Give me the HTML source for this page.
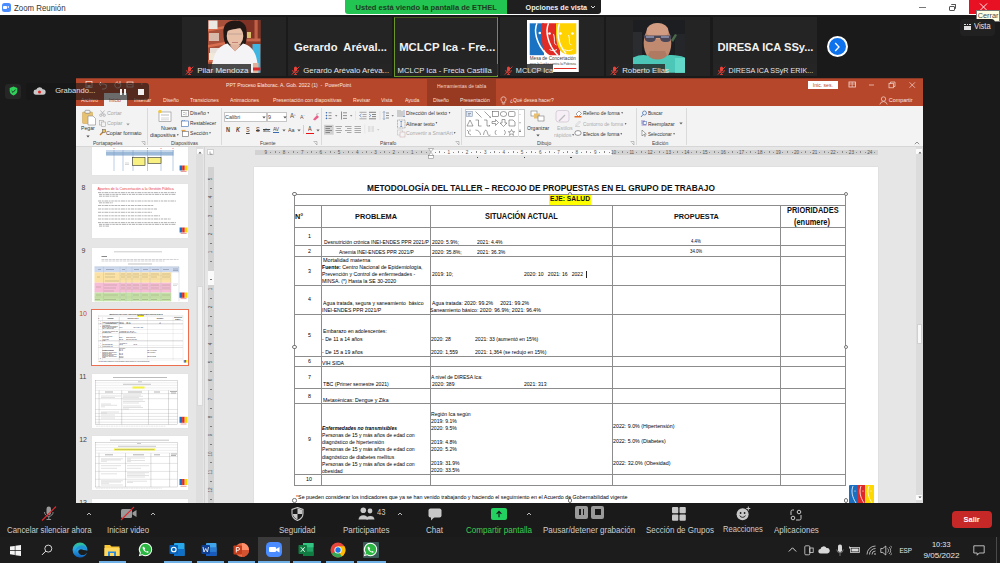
<!DOCTYPE html>
<html><head><meta charset="utf-8">
<style>
*{margin:0;padding:0;box-sizing:border-box}
html,body{width:1000px;height:563px;overflow:hidden;background:#1a1a1a;font-family:"Liberation Sans",sans-serif;position:relative}
.a{position:absolute;white-space:nowrap}
.tile{position:absolute;top:17px;width:104px;height:59px;background:#242424}
.nm{position:absolute;height:12px;background:#2b2b2b;color:#e6e6e6;font-size:8px;line-height:12px;padding-left:16px;overflow:hidden}
.big{position:absolute;width:104px;text-align:center;color:#f2f2f2;font-weight:bold;font-size:10.4px;line-height:14px}
.rb{line-height:6px;color:#444;transform:scaleX(0.8696);transform-origin:0 50%}
.ptx{line-height:6px;transform:scaleX(0.8696);transform-origin:0 50%}
.th{width:96px;height:54px;background:#fff;box-shadow:0 0 0.6px #c8c8c8;overflow:hidden}
.tn{font-size:7px;line-height:8px;color:#444}
.rn{font-size:4.6px;line-height:5.6px;color:#555;text-align:center}
.rnv{font-size:4.6px;line-height:6px;color:#555;text-align:center;transform:rotate(-90deg)}
.tt{color:#000}
.dd{display:inline-block;width:0;height:0;border-left:1.8px solid transparent;border-right:1.8px solid transparent;border-top:2px solid #666;margin-left:1.5px;vertical-align:middle;position:relative;top:-0.5px}
.nmt{font-size:8px;line-height:10px;color:#e4e4e4}
.bigt{font-size:10.4px;line-height:14px;font-weight:bold;color:#f2f2f2}
.zt{line-height:10px;color:#cdcdcd;transform:scaleX(0.9259);transform-origin:0 50%}
.tb{line-height:10px;color:#e8e8e8}
</style></head><body>
<!-- TITLE BAR -->
<div class="a" style="left:0;top:0;width:1000px;height:15px;background:#fff"></div>
<div class="a" style="left:1.5px;top:3px;width:9.5px;height:8.5px;background:#4a8cff;border-radius:2.5px"></div>
<div class="a" style="left:3.3px;top:5.6px;width:4px;height:3.4px;background:#fff;border-radius:0.8px"></div>
<div class="a" style="left:7.2px;top:5.8px;width:0;height:0;border-right:2.4px solid #fff;border-top:1.5px solid transparent;border-bottom:1.5px solid transparent"></div>
<div class="a" style="left:14px;top:2.8px;font-size:8.9px;line-height:10px;color:#333;transform:scaleX(0.885);transform-origin:0 50%">Zoom Reunión</div>
<!-- banner -->
<div class="a" style="left:345px;top:0;width:162px;height:13.5px;background:#22c55e;background:#23c552;border-radius:0 0 0 3px"></div>
<div class="a" style="left:355.5px;top:2.5px;font-size:7.55px;line-height:10px;font-weight:bold;color:#1d3b22">Usted está viendo la pantalla de ETHEL</div>
<div class="a" style="left:507px;top:0;width:94px;height:13.5px;background:#1f1f1f;border-radius:0 0 3px 0"></div>
<div class="a" style="left:525.6px;top:2.5px;font-size:7.2px;line-height:10px;font-weight:bold;color:#f0f0f0">Opciones de vista</div>
<svg class="a" style="left:590px;top:5px" width="6" height="4" viewBox="0 0 6 4"><path d="M1 1 L3 3 L5 1" stroke="#ddd" stroke-width="1" fill="none"/></svg>
<!-- window controls -->
<div class="a" style="left:919px;top:6.5px;width:6.5px;height:1px;background:#777"></div>
<div class="a" style="left:949px;top:5.5px;width:6px;height:5px;border:1px solid #555;border-radius:1px"></div>
<div class="a" style="left:950.5px;top:4.3px;width:5.5px;height:5px;border-top:1px solid #555;border-right:1px solid #555;border-radius:1px"></div>
<div class="a" style="left:968.5px;top:0;width:31.5px;height:13.5px;background:#e81123"></div>
<svg class="a" style="left:979px;top:3px" width="9" height="8" viewBox="0 0 9 8"><path d="M1 0.5 L8 7.5 M8 0.5 L1 7.5" stroke="#fff" stroke-width="0.9"/></svg>
<div class="a" style="left:976px;top:9.5px;width:23.5px;height:12px;background:#ffffe1;border:1px solid #767676"></div>
<div class="a" style="left:977.8px;top:11px;font-size:7.25px;line-height:9px;color:#3c4a55">Cerrar</div>
<!-- Vista -->
<div class="a" style="left:960px;top:19px;width:35px;height:17px;background:#212121;border-radius:4px"></div>
<div class="a" style="left:964px;top:23.5px;width:7px;height:6.5px;background:#e0e0e0"></div>
<div class="a" style="left:964px;top:24.8px;width:7px;height:0.6px;background:#212121"></div>
<div class="a" style="left:966.2px;top:23.5px;width:0.5px;height:1.3px;background:#212121"></div>
<div class="a" style="left:968.4px;top:23.5px;width:0.5px;height:1.3px;background:#212121"></div>
<div class="a" style="left:974px;top:22.4px;font-size:8.2px;line-height:10px;color:#e6e6e6;transform:scaleX(0.92);transform-origin:0 50%">Vista</div>

<!-- TILES -->
<div class="tile" style="left:182px"></div>
<div class="tile" style="left:288px"></div>
<div class="tile" style="left:394px;top:16.5px;height:60px;border:1px solid #6a962a;border-top-color:#44561f;background:#242424"></div>
<div class="tile" style="left:500px"></div>
<div class="tile" style="left:606px"></div>
<div class="tile" style="left:713px"></div>

<!-- Pilar photo -->
<svg class="a" style="left:208.2px;top:20.2px" width="52.4" height="52.8" viewBox="0 0 52.4 52.8">
 <rect width="52.4" height="52.8" fill="#a9503a"/>
 <path d="M0 9 L22 5 L22 7.5 L0 11.5z M0 25 L22 21 L22 23.5 L0 27.5z M0 40 L20 37 L20 39.5 L0 42.5z" fill="#d87050"/>
 <rect x="0.5" y="0.5" width="9" height="8.5" fill="#ece8e4"/>
 <rect x="1" y="13" width="10" height="8" fill="#d8b8a8"/>
 <rect x="2" y="28" width="11" height="7" fill="#e8e0d8"/>
 <rect x="1" y="33" width="8" height="7" fill="#f0e8d8"/>
 <rect x="4" y="43" width="7" height="4" fill="#e8c020"/>
 <rect x="30" y="0" width="22.4" height="20" fill="#803224"/>
 <rect x="46.5" y="0" width="3.2" height="22" fill="#c06046"/>
 <rect x="30" y="18.5" width="22.4" height="3" fill="#c8664c"/>
 <rect x="39" y="12" width="4" height="6" fill="#d8c070"/>
 <rect x="36" y="21.5" width="16.4" height="12" fill="#903e2c"/>
 <path d="M44.5 24 h7.9 v28.8 h-7.9z" fill="#3fb6e2"/>
 <path d="M15.5 14 C14.5 4 20 0.5 27 0.5 C35 0.5 39.5 5 38.5 14 C39 20 38 24 36 26.5 L19 26.5 C16.5 23 15.5 19 15.5 14z" fill="#221816"/>
 <ellipse cx="27" cy="16" rx="8.3" ry="10.2" fill="#e8c0a8"/>
 <path d="M19.5 7.5 C22 4 31 4 35 7.5 C31 8.5 24 9 19.5 11z" fill="#221816"/>
 <path d="M20 14 h14" stroke="#9a8a88" stroke-width="0.5"/>
 <path d="M24 22.5 h6" stroke="#b8706a" stroke-width="0.8"/>
 <path d="M3 52.8 C5 34 9 26.5 19.5 23.5 L27 31 L35 23.5 C46 26.5 50 36 50 52.8z" fill="#f4f4f6"/>
 <path d="M21.5 24.5 L27 31.5 L33 24.5z" fill="#e0b49e"/>
 <path d="M45 43 h5.5 v9.8 h-5.5z" fill="#e0b098"/>
 <rect x="45" y="47.5" width="7.4" height="3" fill="#d82a2a"/>
</svg>
<!-- MCLCP logo -->
<svg class="a" style="left:527.2px;top:20.2px" width="51.8" height="52.2" viewBox="0 0 51.8 52.2">
 <rect width="51.8" height="52.2" fill="#fff"/>
 <path d="M2.7 3.3 H17 V35.2 H2.7z" fill="#1a73c2"/>
 <path d="M15 3.3 H33 V35.2 H23 C18 33 15 28 15 20z" fill="#e22b25"/>
 <path d="M29 3.3 H49.3 V33.5 C45 35.5 38 35 34 31.5 C30 27 29 20 29 12z" fill="#ffd200"/>
 <path d="M10 3.3 C7 10 8 23 20.5 35.5 M21.5 3.3 C18.5 10 19.5 24 31 35.5 M32.5 3.3 C29.5 12 30.5 24 39 33.5" stroke="#fff" stroke-width="1.5" fill="none"/>
 <circle cx="12.8" cy="13" r="1.3" fill="#fff"/><circle cx="22.5" cy="13.5" r="1.3" fill="#fff"/><circle cx="33.5" cy="13.5" r="1.3" fill="#fff"/><circle cx="45.5" cy="13.5" r="1.3" fill="#fff"/>
 <path d="M26.5 14 C28.5 20 26 24 29.5 25 M41.5 15 C43.5 20 41 24 44.5 25" stroke="#fff" stroke-width="0.9" fill="none"/>
 <path d="M22.5 29.5 c2 1.5 5 1.5 7.5 0 M37.5 29.5 c2 1.5 6 1.5 8 0" stroke="#fff" stroke-width="0.9" fill="none"/>
 <text x="2.8" y="40.3" font-family="Liberation Sans" font-size="4.5" fill="#333" textLength="46">Mesa de Concertación</text>
 <text x="2.8" y="45.2" font-family="Liberation Sans" font-size="3.4" fill="#444" textLength="46">para la Lucha contra la Pobreza</text>
 <rect x="27" y="48" width="22.3" height="1" fill="#e22b25"/>
</svg>
<!-- Roberto photo -->
<svg class="a" style="left:633.3px;top:20.2px" width="52.2" height="52.8" viewBox="0 0 52.2 52.8">
 <rect width="52.2" height="52.8" fill="#1c1e22"/>
 <rect x="0" y="12" width="9" height="26" fill="#2a2c30"/>
 <rect x="42" y="14" width="10.2" height="22" fill="#24262a"/>
 <path d="M38 20 l4 -6 l2 1 l-4 7z" fill="#4a6a4a"/>
 <ellipse cx="24.5" cy="23" rx="13.8" ry="19.5" fill="#bf8a70"/>
 <ellipse cx="24.5" cy="11" rx="11" ry="8" fill="#d29c82"/>
 <path d="M10.5 15.5 h28 l-1 5 c-2.5 2 -7 2 -9.5 0 l-1 -2.5 h-4 l-1 2.5 c-2.5 2 -7 2 -9.5 0z" fill="#4a4658"/>
 <path d="M13 17 h8 M28 17 h8" stroke="#b8c0e0" stroke-width="1.2"/>
 <path d="M20 31.5 h9" stroke="#9a6050" stroke-width="1"/>
 <path d="M0 52.8 V37.5 C6 34.5 11 34.5 15 35.5 C19 40 30 40 34 35.5 C40 34.5 46 35.5 52.2 37.5 V52.8z" fill="#4cc6b6"/>
 <path d="M15 35.5 C19 41 30 41 34 35.5 L32 31 h-15z" fill="#b07a62"/>
 <rect x="42" y="38" width="10" height="14.8" fill="#62d8c8"/>
</svg>
<div class="a" style="left:182px;top:63.6px;width:68.8px;height:11.6px;background:rgba(38,38,38,0.82)"></div>
<svg class="a" style="left:184.8px;top:65.5px" width="9" height="9" viewBox="0 0 9 9"><rect x="3" y="0.6" width="3" height="5" rx="1.5" fill="#e8433a"/><path d="M1.6 4 a2.9 2.9 0 0 0 5.8 0 M4.5 7 v1.5 M3 8.5 h3" stroke="#e8433a" stroke-width="0.8" fill="none"/><path d="M0.8 8.6 L8.3 0.6" stroke="#e8433a" stroke-width="0.9"/></svg>
<div class="a nmt" style="left:197.2px;top:65.80px">Pilar Mendoza</div>
<div class="a" style="left:288.5px;top:63.6px;width:103px;height:11.6px;background:rgba(38,38,38,0.82)"></div>
<svg class="a" style="left:291.3px;top:65.5px" width="9" height="9" viewBox="0 0 9 9"><rect x="3" y="0.6" width="3" height="5" rx="1.5" fill="#e8433a"/><path d="M1.6 4 a2.9 2.9 0 0 0 5.8 0 M4.5 7 v1.5 M3 8.5 h3" stroke="#e8433a" stroke-width="0.8" fill="none"/><path d="M0.8 8.6 L8.3 0.6" stroke="#e8433a" stroke-width="0.9"/></svg>
<div class="a nmt" style="left:303.2px;top:65.80px;font-size:7.85px">Gerardo Arévalo Aréva...</div>
<div class="a" style="left:395px;top:63.6px;width:103.5px;height:11.6px;background:rgba(38,38,38,0.82)"></div>
<div class="a nmt" style="left:397.5px;top:65.80px;font-size:7.66px">MCLCP Ica - Frecia Castilla</div>
<div class="a" style="left:501px;top:63.6px;width:51.5px;height:11.6px;background:rgba(38,38,38,0.82)"></div>
<svg class="a" style="left:503.8px;top:65.5px" width="9" height="9" viewBox="0 0 9 9"><rect x="3" y="0.6" width="3" height="5" rx="1.5" fill="#e8433a"/><path d="M1.6 4 a2.9 2.9 0 0 0 5.8 0 M4.5 7 v1.5 M3 8.5 h3" stroke="#e8433a" stroke-width="0.8" fill="none"/><path d="M0.8 8.6 L8.3 0.6" stroke="#e8433a" stroke-width="0.9"/></svg>
<div class="a nmt" style="left:515.8px;top:66.00px;font-size:7.3px">MCLCP Ica</div>
<div class="a" style="left:607px;top:63.6px;width:58px;height:11.6px;background:rgba(38,38,38,0.82)"></div>
<svg class="a" style="left:609.8px;top:65.5px" width="9" height="9" viewBox="0 0 9 9"><rect x="3" y="0.6" width="3" height="5" rx="1.5" fill="#e8433a"/><path d="M1.6 4 a2.9 2.9 0 0 0 5.8 0 M4.5 7 v1.5 M3 8.5 h3" stroke="#e8433a" stroke-width="0.8" fill="none"/><path d="M0.8 8.6 L8.3 0.6" stroke="#e8433a" stroke-width="0.9"/></svg>
<div class="a nmt" style="left:622.2px;top:65.80px;font-size:7.8px">Roberto Elias</div>
<div class="a" style="left:714px;top:63.6px;width:103px;height:11.6px;background:rgba(38,38,38,0.82)"></div>
<svg class="a" style="left:716.8px;top:65.5px" width="9" height="9" viewBox="0 0 9 9"><rect x="3" y="0.6" width="3" height="5" rx="1.5" fill="#e8433a"/><path d="M1.6 4 a2.9 2.9 0 0 0 5.8 0 M4.5 7 v1.5 M3 8.5 h3" stroke="#e8433a" stroke-width="0.8" fill="none"/><path d="M0.8 8.6 L8.3 0.6" stroke="#e8433a" stroke-width="0.9"/></svg>
<div class="a nmt" style="left:728.6px;top:66.20px;font-size:7.15px">DIRESA ICA SSyR ERIK...</div>
<div class="a bigt" style="left:294px;top:39.6px;font-size:11.2px">Gerardo&nbsp; Aréval...</div>
<div class="a bigt" style="left:399.2px;top:39.6px;font-size:11.33px">MCLCP Ica - Fre...</div>
<div class="a bigt" style="left:717.6px;top:39.6px;font-size:11.2px;letter-spacing:-0.05px">DIRESA ICA SSy...</div>
<!-- next arrow -->
<div class="a" style="left:826.5px;top:36.2px;width:21px;height:21px;border-radius:50%;background:#0e72ed;border:2px solid #fff"></div>
<svg class="a" style="left:833px;top:42px" width="8" height="10" viewBox="0 0 8 10"><path d="M2.2 1 L6 5 L2.2 9" stroke="#fff" stroke-width="1.3" fill="none"/></svg>
<!-- PPT WINDOW -->
<div class="a" style="left:76px;top:78px;width:847px;height:424.5px;background:#e6e6e6;overflow:hidden"></div>
<div class="a" style="left:76px;top:78px;width:847px;height:28px;background:#b7472a"></div>
<div class="a" style="left:427.2px;top:78px;width:68.8px;height:28px;background:#983a22"></div>
<div class="a" style="left:76px;top:78px;width:847px;height:0.8px;background:#8a3a26"></div>
<div class="a ptx" style="left:226px;top:82px;font-size:5.865px;line-height:6px;color:#fbe9e3">PPT Proceso Elaborac. A. Gob. 2022 (1) &nbsp;- &nbsp;PowerPoint</div>
<div class="a ptx" style="left:436.75px;top:82.5px;font-size:5.750px;line-height:6px;color:#f2d6cc">Herramientas de tabla</div>
<!-- quick access icons -->
<svg class="a" style="left:84px;top:80px" width="62" height="10" viewBox="0 0 62 10">
 <rect x="2" y="1.5" width="6" height="6" fill="none" stroke="#f3d9d0" stroke-width="0.8"/><rect x="3.5" y="5" width="3" height="2.5" fill="#f3d9d0"/>
 <path d="M15 4 h5 a2.5 2.5 0 0 1 0 5 h-2 M15 4 l2 -2 M15 4 l2 2" stroke="#f3d9d0" stroke-width="0.8" fill="none"/>
 <path d="M21.5 5 h1.5" stroke="#f3d9d0" stroke-width="0.6"/>
 <path d="M34 2 a3 3 0 1 0 2 1 M36 1 v2.5 h-2.5" stroke="#f3d9d0" stroke-width="0.8" fill="none"/>
 <rect x="43" y="2" width="6" height="5" fill="none" stroke="#f3d9d0" stroke-width="0.8"/><path d="M44 4.5 h4" stroke="#f3d9d0" stroke-width="0.6"/>
 <path d="M57 4 h1.5" stroke="#f3d9d0" stroke-width="0.7"/>
</svg>
<!-- right title controls -->
<div class="a" style="left:808px;top:81px;width:29.6px;height:7.8px;background:#fff"></div>
<div class="a" style="left:812.8px;top:81.8px;font-size:5.1px;line-height:6px;color:#b7472a">Inic. ses.</div>
<svg class="a" style="left:848px;top:81px" width="70" height="8" viewBox="0 0 70 8">
 <rect x="1" y="1" width="6.5" height="5" fill="none" stroke="#f6ddd5" stroke-width="0.8"/><path d="M4.2 1 v5 M1 3 h6.5" stroke="#f6ddd5" stroke-width="0.6"/>
 <path d="M21 4 h5" stroke="#f6ddd5" stroke-width="0.7"/>
 <rect x="41" y="2.3" width="4.5" height="4.5" fill="none" stroke="#f6ddd5" stroke-width="0.7"/><path d="M42.5 2.3 v-1.3 h4.5 v4.5 h-1.5" stroke="#f6ddd5" stroke-width="0.7" fill="none"/>
 <path d="M61.5 1.3 l5.5 5.5 M67 1.3 l-5.5 5.5" stroke="#f6ddd5" stroke-width="0.7"/>
</svg>
<svg class="a" style="left:879px;top:96px" width="9" height="9" viewBox="0 0 9 9"><circle cx="4.5" cy="3" r="2.2" fill="none" stroke="#f6ddd5" stroke-width="0.7"/><path d="M0.8 8.5 a3.8 3.8 0 0 1 7.4 0" fill="none" stroke="#f6ddd5" stroke-width="0.7"/></svg>
<div class="a" style="left:888.8px;top:97px;font-size:5.4px;line-height:6px;color:#fbe9e3">Compartir</div>
<!-- tabs -->
<div class="a" style="left:103.5px;top:93.2px;width:23.7px;height:13px;background:#f3f3f3"></div>
<div class="a ptx" style="left:81px;top:97px;font-size:5.865px;line-height:6px;color:#fbe3da">Archivo</div>
<div class="a ptx" style="left:109px;top:97px;font-size:5.865px;line-height:6px;color:#b7472a">Inicio</div>
<div class="a ptx" style="left:134px;top:97px;font-size:5.865px;line-height:6px;color:#fbe3da">Insertar</div>
<div class="a ptx" style="left:162.5px;top:97px;font-size:5.865px;line-height:6px;color:#fbe3da">Diseño</div>
<div class="a ptx" style="left:190px;top:97px;font-size:5.865px;line-height:6px;color:#fbe3da">Transiciones</div>
<div class="a ptx" style="left:230px;top:97px;font-size:5.865px;line-height:6px;color:#fbe3da">Animaciones</div>
<div class="a ptx" style="left:272.7px;top:97px;font-size:5.980px;line-height:6px;color:#fbe3da">Presentación con diapositivas</div>
<div class="a ptx" style="left:353px;top:97px;font-size:5.865px;line-height:6px;color:#fbe3da">Revisar</div>
<div class="a ptx" style="left:381px;top:97px;font-size:5.865px;line-height:6px;color:#fbe3da">Vista</div>
<div class="a ptx" style="left:404.5px;top:97px;font-size:5.865px;line-height:6px;color:#fbe3da">Ayuda</div>
<div class="a ptx" style="left:432.5px;top:97px;font-size:5.865px;line-height:6px;color:#fbe3da">Diseño</div>
<div class="a ptx" style="left:459.5px;top:97px;font-size:5.865px;line-height:6px;color:#fbe3da">Presentación</div>
<svg class="a" style="left:500px;top:95.5px" width="7" height="9" viewBox="0 0 7 9"><path d="M3.5 0.8 a2.5 2.5 0 0 1 1.4 4.6 v1.4 h-2.8 v-1.4 a2.5 2.5 0 0 1 1.4 -4.6 M2.3 8 h2.4" fill="none" stroke="#fbe3da" stroke-width="0.7"/></svg>
<div class="a ptx" style="left:510px;top:97px;font-size:5.692px;line-height:6px;color:#fbe3da">¿Qué desea hacer?</div>

<!-- RIBBON -->
<div class="a" style="left:76px;top:106px;width:847px;height:41px;background:#f3f3f3;border-bottom:1px solid #d6d6d6"></div>
<!-- separators -->
<div class="a" style="left:147.2px;top:108px;width:0.7px;height:37px;background:#dadada"></div>
<div class="a" style="left:221.3px;top:108px;width:0.7px;height:37px;background:#dadada"></div>
<div class="a" style="left:320.5px;top:108px;width:0.7px;height:37px;background:#dadada"></div>
<div class="a" style="left:461px;top:108px;width:0.7px;height:37px;background:#dadada"></div>
<div class="a" style="left:635.8px;top:108px;width:0.7px;height:37px;background:#dadada"></div>
<div class="a" style="left:685.7px;top:108px;width:0.7px;height:37px;background:#dadada"></div>
<!-- group labels -->
<div class="a rb" style="left:93.3px;top:139.8px;font-size:5.750px">Portapapeles</div>
<div class="a rb" style="left:170.5px;top:139.8px;font-size:5.750px">Diapositivas</div>
<div class="a rb" style="left:260px;top:139.8px;font-size:5.750px">Fuente</div>
<div class="a rb" style="left:380px;top:139.8px;font-size:5.750px">Párrafo</div>
<div class="a rb" style="left:537px;top:139.8px;font-size:5.750px">Dibujo</div>
<div class="a rb" style="left:651.8px;top:139.8px;font-size:5.750px">Edición</div>
<svg class="a" style="left:141px;top:141px" width="5" height="5" viewBox="0 0 5 5"><path d="M0.5 0.5 h3.5 v3.5 M1.5 1.5 l2.5 2.5" stroke="#888" stroke-width="0.5" fill="none"/></svg>
<svg class="a" style="left:313px;top:141px" width="5" height="5" viewBox="0 0 5 5"><path d="M0.5 0.5 h3.5 v3.5 M1.5 1.5 l2.5 2.5" stroke="#888" stroke-width="0.5" fill="none"/></svg>
<svg class="a" style="left:455px;top:141px" width="5" height="5" viewBox="0 0 5 5"><path d="M0.5 0.5 h3.5 v3.5 M1.5 1.5 l2.5 2.5" stroke="#888" stroke-width="0.5" fill="none"/></svg>
<svg class="a" style="left:630px;top:141px" width="5" height="5" viewBox="0 0 5 5"><path d="M0.5 0.5 h3.5 v3.5 M1.5 1.5 l2.5 2.5" stroke="#888" stroke-width="0.5" fill="none"/></svg>
<svg class="a" style="left:914px;top:141px" width="6" height="4" viewBox="0 0 6 4"><path d="M0.8 3.2 L3 1 L5.2 3.2" stroke="#666" stroke-width="0.7" fill="none"/></svg>
<!-- Portapapeles -->
<svg class="a" style="left:81px;top:109px" width="16" height="17" viewBox="0 0 16 17">
 <rect x="1.5" y="3" width="10" height="11.5" rx="0.8" fill="#e8c170" stroke="#c9a050" stroke-width="0.5"/>
 <rect x="4" y="1.3" width="5" height="3" rx="0.8" fill="#f3f3f3" stroke="#777" stroke-width="0.6"/>
 <path d="M7 7 h5 l2.5 2.5 v6.5 h-7.5 z" fill="#fff" stroke="#888" stroke-width="0.6"/>
</svg>
<div class="a rb" style="left:81px;top:125px;font-size:5.914px;color:#333">Pegar</div>
<svg class="a" style="left:85.5px;top:134.5px" width="4" height="3" viewBox="0 0 4 3"><path d="M0.3 0.5 h3.4 l-1.7 2z" fill="#555"/></svg>
<svg class="a" style="left:98.5px;top:109.5px" width="7" height="7" viewBox="0 0 7 7"><circle cx="1.8" cy="5.2" r="1.2" fill="none" stroke="#999" stroke-width="0.6"/><circle cx="5.2" cy="5.2" r="1.2" fill="none" stroke="#999" stroke-width="0.6"/><path d="M2.5 4.2 L5.5 0.5 M4.5 4.2 L1.5 0.5" stroke="#999" stroke-width="0.6"/></svg>
<div class="a rb" style="left:106.5px;top:110px;font-size:6.095px;color:#a6a6a6">Cortar</div>
<svg class="a" style="left:98.5px;top:119.5px" width="7" height="7" viewBox="0 0 7 7"><rect x="0.5" y="0.5" width="4" height="4.5" fill="none" stroke="#a8a8a8" stroke-width="0.6"/><rect x="2.5" y="2" width="4" height="4.5" fill="#f3f3f3" stroke="#a8a8a8" stroke-width="0.6"/></svg>
<div class="a rb" style="left:106.5px;top:120px;font-size:6.095px;color:#a6a6a6">Copiar</div>
<svg class="a" style="left:126px;top:122.5px" width="4" height="3" viewBox="0 0 4 3"><path d="M0.3 0.5 h3.4 l-1.7 2z" fill="#999"/></svg>
<svg class="a" style="left:98.5px;top:129px" width="7" height="7" viewBox="0 0 7 7"><path d="M1 6 L4 3" stroke="#c08030" stroke-width="1.4"/><rect x="3.5" y="0.5" width="3" height="3" fill="#e8c060" stroke="#555" stroke-width="0.5"/></svg>
<div class="a rb" style="left:106.4px;top:130px;font-size:6.175px;color:#333">Copiar formato</div>
<!-- Diapositivas -->
<svg class="a" style="left:157px;top:109px" width="16" height="14" viewBox="0 0 16 14">
 <rect x="2" y="3" width="12" height="9.5" fill="#fff" stroke="#888" stroke-width="0.6"/>
 <path d="M4 9 h8 M4 10.8 h8" stroke="#bbb" stroke-width="0.6"/><rect x="4" y="5" width="8" height="2" fill="#ddd"/>
 <circle cx="3" cy="2.5" r="1.7" fill="#f6c830"/>
</svg>
<div class="a rb" style="left:161px;top:125px;font-size:6.210px;color:#333">Nueva</div>
<div class="a rb" style="left:150px;top:132.3px;font-size:6.210px;color:#333">diapositiva<i class="dd"></i></div>
<svg class="a" style="left:180.5px;top:109.5px" width="8" height="7" viewBox="0 0 8 7"><rect x="0.5" y="0.5" width="7" height="6" fill="#fff" stroke="#666" stroke-width="0.6"/><path d="M2 2.5 h2 M2 4.5 h2 M5 2 v3.5" stroke="#888" stroke-width="0.5"/></svg>
<div class="a rb" style="left:189.7px;top:110.2px;font-size:5.899px;color:#333">Diseño<i class="dd"></i></div>
<svg class="a" style="left:180.5px;top:119.5px" width="8" height="7" viewBox="0 0 8 7"><rect x="0.5" y="1" width="7" height="5.5" fill="#fff" stroke="#3a6ab0" stroke-width="0.6"/><path d="M1 1 a2 2 0 0 1 3 -0.5" stroke="#3a6ab0" stroke-width="0.6" fill="none"/></svg>
<div class="a rb" style="left:189.7px;top:120.2px;font-size:5.651px;color:#333">Restablecer</div>
<svg class="a" style="left:180.5px;top:129px" width="8" height="8" viewBox="0 0 8 8"><rect x="1.5" y="2.5" width="6" height="5" fill="#fff" stroke="#666" stroke-width="0.6"/><path d="M0.5 1.5 h4" stroke="#e8a040" stroke-width="1.2"/></svg>
<div class="a rb" style="left:189.7px;top:130.2px;font-size:5.899px;color:#333">Sección<i class="dd"></i></div>
<!-- Fuente -->
<div class="a" style="left:223.6px;top:111.5px;width:43px;height:10px;background:#fff;border:0.6px solid #c6c6c6"></div>
<div class="a" style="left:266.8px;top:111.5px;width:20px;height:10px;background:#fff;border:0.6px solid #c6c6c6"></div>
<div class="a rb" style="left:225px;top:113.5px;font-size:6.210px;color:#444">Calibri</div>
<div class="a rb" style="left:268.4px;top:113.5px;font-size:6.210px;color:#444">9</div>
<svg class="a" style="left:262px;top:115.5px" width="4" height="3" viewBox="0 0 4 3"><path d="M0.3 0.5 h3.4 l-1.7 2z" fill="#555"/></svg>
<svg class="a" style="left:282.5px;top:115.5px" width="4" height="3" viewBox="0 0 4 3"><path d="M0.3 0.5 h3.4 l-1.7 2z" fill="#555"/></svg>
<div class="a rb" style="left:289.5px;top:113px;font-size:6.900px;color:#555">A<span style="font-size:3.5px;vertical-align:top;color:#3a6ab0">^</span></div>
<div class="a rb" style="left:299.6px;top:113.5px;font-size:6.095px;color:#555">A<span style="font-size:3.5px;vertical-align:top;color:#3a6ab0">ˇ</span></div>
<svg class="a" style="left:311.5px;top:112.5px" width="8" height="8" viewBox="0 0 8 8"><path d="M1 6.5 L5 2 L7 4 L3 7.5 z" fill="#e8608a"/><path d="M4 1.5 L6.5 0.5" stroke="#888" stroke-width="0.6"/></svg>
<div class="a rb" style="left:226px;top:126.5px;font-size:6.325px;font-weight:bold;color:#444">N</div>
<div class="a rb" style="left:236px;top:126.5px;font-size:6.325px;font-weight:bold;font-style:italic;color:#444">K</div>
<div class="a rb" style="left:246px;top:126.5px;font-size:6.325px;color:#444;text-decoration:underline">S</div>
<div class="a rb" style="left:255.6px;top:126.5px;font-size:6.325px;color:#444;text-decoration:line-through">S</div>
<div class="a rb" style="left:263.3px;top:126.5px;font-size:5.290px;color:#444">abc</div><div class="a" style="left:263.3px;top:129.3px;width:7px;height:0.5px;background:#444"></div>
<div class="a rb" style="left:273.2px;top:126px;font-size:5.520px;color:#444;text-decoration:underline;text-decoration-color:#3a6ab0">AV</div>
<svg class="a" style="left:282px;top:128.5px" width="4" height="3" viewBox="0 0 4 3"><path d="M0.3 0.5 h3.4 l-1.7 2z" fill="#666"/></svg>
<div class="a rb" style="left:288px;top:126.5px;font-size:6.210px;color:#444">Aa</div>
<svg class="a" style="left:296.5px;top:128.5px" width="4" height="3" viewBox="0 0 4 3"><path d="M0.3 0.5 h3.4 l-1.7 2z" fill="#666"/></svg>
<div class="a" style="left:302.5px;top:125px;width:0.6px;height:9px;background:#d0d0d0"></div>
<div class="a rb" style="left:307.5px;top:125.5px;font-size:6.325px;color:#444">A</div>
<div class="a" style="left:306px;top:132.5px;width:7.5px;height:1.6px;background:#e81010"></div>
<svg class="a" style="left:316px;top:128.5px" width="4" height="3" viewBox="0 0 4 3"><path d="M0.3 0.5 h3.4 l-1.7 2z" fill="#666"/></svg>
<!-- Parrafo -->
<svg class="a" style="left:324px;top:111px" width="140" height="28" viewBox="0 0 140 28">
 <g fill="#3a6ab0"><circle cx="2.5" cy="1.8" r="0.8"/><circle cx="2.5" cy="4.6" r="0.8"/><circle cx="2.5" cy="7.4" r="0.8"/></g>
 <path d="M4.5 1.8 h3 M4.5 4.6 h3 M4.5 7.4 h3" stroke="#666" stroke-width="0.7"/>
 <path d="M11 4.3 h2.4 l-1.2 1.3z" fill="#666"/>
 <path d="M17.5 0.5 v8" stroke="#3a6ab0" stroke-width="0.7"/>
 <path d="M19 1.8 h4 M19 4.6 h4 M19 7.4 h4" stroke="#666" stroke-width="0.7"/>
 <path d="M26 4.3 h2.4 l-1.2 1.3z" fill="#666"/>
 <path d="M31.5 0 v9" stroke="#ddd" stroke-width="0.6"/>
 <path d="M35.5 1.3 h7 M38.5 3.5 h4 M38.5 5.6 h4 M35.5 7.8 h7" stroke="#888" stroke-width="0.7"/><path d="M37.5 3 l-2 1.5 l2 1.5" stroke="#3a6ab0" stroke-width="0.6" fill="none"/>
 <path d="M45 1.3 h7 M48 3.5 h4 M48 5.6 h4 M45 7.8 h7" stroke="#555" stroke-width="0.7"/><path d="M45 3 l2 1.5 l-2 1.5" stroke="#3a6ab0" stroke-width="0.6" fill="none"/>
 <path d="M56 0 v9" stroke="#ddd" stroke-width="0.6"/>
 <path d="M60 0.5 v8 M59 1.5 l1 -1 l1 1 M59 7.5 l1 1 l1 -1" stroke="#3a6ab0" stroke-width="0.5" fill="none"/>
 <path d="M62 2 h3 M62 4.5 h3 M62 7 h3" stroke="#666" stroke-width="0.7"/>
 <path d="M67.5 4.3 h2.4 l-1.2 1.3z" fill="#666"/>
 <rect x="0" y="13.8" width="9.6" height="9.9" fill="#d0d0d0"/>
 <path d="M1.5 15.5 h6.5 M1.5 17.5 h4.5 M1.5 19.5 h6.5 M1.5 21.5 h4.5" stroke="#555" stroke-width="0.6"/>
 <path d="M11.5 15.5 h6.5 M12.5 17.5 h4.5 M11.5 19.5 h6.5 M12.5 21.5 h4.5" stroke="#777" stroke-width="0.6"/>
 <path d="M21 15.5 h6.5 M23 17.5 h4.5 M21 19.5 h6.5 M23 21.5 h4.5" stroke="#777" stroke-width="0.6"/>
 <path d="M30.5 15.5 h6.5 M30.5 17.5 h6.5 M30.5 19.5 h6.5 M30.5 21.5 h6.5" stroke="#777" stroke-width="0.6"/>
 <path d="M40.8 13.5 v9" stroke="#ddd" stroke-width="0.6"/>
 <path d="M44 16 h2.5 M44 18 h2.5 M44 20 h2.5 M47.5 16 h2.5 M47.5 18 h2.5 M47.5 20 h2.5" stroke="#bbb" stroke-width="0.7"/>
 <path d="M53 18.3 h2.4 l-1.2 1.3z" fill="#bbb"/>
</svg>
<svg class="a" style="left:396.5px;top:109px" width="9" height="29" viewBox="0 0 9 29">
 <path d="M1 1 v7 M3 1 v7 M5 2 v6" stroke="#555" stroke-width="0.5"/><path d="M7 1 v7 M6 7 l1 1 l1 -1" stroke="#3a6ab0" stroke-width="0.5" fill="none"/>
 <rect x="0.5" y="11" width="7.5" height="8" fill="none" stroke="#666" stroke-width="0.5" stroke-dasharray="1 0.6"/><path d="M4.2 12 v6 M3.2 13 l1 -1 l1 1 M3.2 17 l1 1 l1 -1" stroke="#3a6ab0" stroke-width="0.5" fill="none"/>
 <rect x="0.5" y="21" width="5" height="5" fill="#f3f3f3" stroke="#bbb" stroke-width="0.5"/><rect x="3" y="23" width="5" height="5" fill="#f3f3f3" stroke="#c8a8a8" stroke-width="0.5"/>
</svg>
<div class="a rb" style="left:405.6px;top:110.3px;font-size:5.744px;color:#333">Dirección del texto<i class="dd"></i></div>
<div class="a rb" style="left:405.6px;top:120.5px;font-size:5.935px;color:#333">Alinear texto<i class="dd"></i></div>
<div class="a rb" style="left:405.6px;top:130.3px;font-size:5.935px;color:#aaa">Convertir a SmartArt<i class="dd"></i></div>
<!-- Dibujo gallery -->
<div class="a" style="left:464.5px;top:109.3px;width:60px;height:27.5px;background:#fff;border:0.6px solid #c6c6c6"></div>
<div class="a" style="left:517.6px;top:109.3px;width:6.9px;height:27.5px;border-left:0.6px solid #ddd"></div>
<svg class="a" style="left:465px;top:110px" width="60" height="27" viewBox="0 0 60 27">
 <rect x="1.5" y="1.5" width="6" height="5" fill="#dce6f4" stroke="#7a8aa8" stroke-width="0.5"/><path d="M3 3.5 h3 M3 5 h2" stroke="#333" stroke-width="0.4"/>
 <path d="M10.5 1.5 l6 6" stroke="#555" stroke-width="0.55"/>
 <path d="M19.5 1.5 l6 6 M24.5 7.5 h1 v-1" stroke="#555" stroke-width="0.55" fill="none"/>
 <rect x="27.5" y="1.5" width="6" height="5" fill="none" stroke="#555" stroke-width="0.55"/>
 <ellipse cx="38.5" cy="4" rx="3.2" ry="2.5" fill="none" stroke="#555" stroke-width="0.55"/>
 <rect x="43.5" y="1.5" width="6.5" height="5" rx="1.3" fill="none" stroke="#555" stroke-width="0.55"/>
 <path d="M2 16 l3 -6 l3 6 z" fill="none" stroke="#555" stroke-width="0.55"/>
 <path d="M10.5 10 h3 v6 h3" fill="none" stroke="#555" stroke-width="0.55"/>
 <path d="M19 10 h3 v6 h3 l-1 -1" fill="none" stroke="#555" stroke-width="0.55"/>
 <path d="M27 11.5 h3.5 v-2 l3 3 l-3 3 v-2 h-3.5z" fill="none" stroke="#555" stroke-width="0.55"/>
 <path d="M37 9.5 h3 v3.5 h2 l-3.5 3.5 l-3.5 -3.5 h2z" fill="none" stroke="#555" stroke-width="0.55"/>
 <path d="M44 10 h4 l2 2 v4 h-6z" fill="none" stroke="#555" stroke-width="0.55"/>
 <path d="M2 20 l2 2 l-1 1 l3 2 M5 19.5 v2" fill="none" stroke="#555" stroke-width="0.55"/>
 <path d="M10.5 20 a5 5 0 0 1 5 5" fill="none" stroke="#555" stroke-width="0.55"/>
 <path d="M18.5 25 c1 -6 3 -6 4 -2 s2 2 3 2" fill="none" stroke="#555" stroke-width="0.55"/>
 <path d="M31.5 20 a3 3 0 0 0 0 5" fill="none" stroke="#555" stroke-width="0.55"/>
 <path d="M39 20 a3 3 0 0 1 0 5" fill="none" stroke="#555" stroke-width="0.55"/>
 <path d="M46.5 19.5 l1 2.2 h2.2 l-1.8 1.4 l0.7 2.3 l-2.1 -1.4 l-2.1 1.4 l0.7 -2.3 l-1.8 -1.4 h2.2z" fill="none" stroke="#555" stroke-width="0.5"/>
 <path d="M54 4 h2 l-1 1z" fill="#bbb"/>
 <path d="M54 12.5 h2 l-1 1z" fill="#666"/>
 <path d="M54 21 h2 l-1 1z M54 20 h2" stroke="#666" stroke-width="0.4" fill="#666"/>
</svg>
<svg class="a" style="left:530px;top:110px" width="15" height="12" viewBox="0 0 15 12"><rect x="1" y="1" width="6" height="5" fill="#fff" stroke="#777" stroke-width="0.6"/><rect x="4" y="3.5" width="6" height="5" fill="#e8c070"/><rect x="8" y="6" width="6" height="5" fill="#fff" stroke="#777" stroke-width="0.6"/></svg>
<div class="a rb" style="left:527px;top:125.4px;font-size:5.819px;color:#333">Organizar</div>
<svg class="a" style="left:536px;top:134.3px" width="4" height="3" viewBox="0 0 4 3"><path d="M0.3 0.5 h3.4 l-1.7 2z" fill="#555"/></svg>
<svg class="a" style="left:555px;top:110px" width="15" height="13" viewBox="0 0 15 13"><rect x="1" y="0.5" width="13" height="11.5" rx="2.5" fill="#f6f0f6" stroke="#c8b8c8" stroke-width="0.6"/><path d="M4 11 l6 -6" stroke="#bbb" stroke-width="1.2"/></svg>
<div class="a rb" style="left:556.6px;top:125.4px;font-size:6.095px;color:#b0b0b0">Estilos</div>
<div class="a rb" style="left:553.5px;top:132.2px;font-size:6.095px;color:#b0b0b0">rápidos<i class="dd"></i></div>
<svg class="a" style="left:574px;top:109.3px" width="8" height="28" viewBox="0 0 8 28">
 <path d="M2 5 l3 -3 l2.5 2.5 l-3 3z" fill="#fff" stroke="#555" stroke-width="0.5"/><rect x="0.5" y="7" width="7" height="1.5" fill="#e86a20"/>
 <path d="M1 17.5 h5 M1.5 16 l4 -4 l1 1 l-4 4z" stroke="#bbb" stroke-width="0.5" fill="none"/>
 <ellipse cx="4" cy="24" rx="3.2" ry="2.4" fill="#fff" stroke="#555" stroke-width="0.6"/>
</svg>
<div class="a rb" style="left:583px;top:110.2px;font-size:5.552px;color:#333">Relleno de forma<i class="dd"></i></div>
<div class="a rb" style="left:583px;top:120.5px;font-size:5.552px;color:#aaa">Contorno de forma<i class="dd"></i></div>
<div class="a rb" style="left:583px;top:130.5px;font-size:5.552px;color:#333">Efectos de forma<i class="dd"></i></div>
<!-- Edicion -->
<svg class="a" style="left:640px;top:109.5px" width="8" height="28" viewBox="0 0 8 28">
 <circle cx="4.5" cy="3" r="2" fill="none" stroke="#3a6ab0" stroke-width="0.7"/><path d="M3 4.5 l-2 2.5" stroke="#3a6ab0" stroke-width="0.8"/>
 <path d="M1 11 h4 M1 13 h3 M1.5 15 h5" stroke="#8a6ac0" stroke-width="0.8"/><rect x="3" y="11.5" width="3.5" height="3" fill="none" stroke="#3a6ab0" stroke-width="0.5"/>
 <path d="M2 20 v6 l1.5 -1.5 l1.2 2 l0.8 -0.4 l-1.2 -2 h2z" fill="#fff" stroke="#555" stroke-width="0.5"/>
</svg>
<div class="a rb" style="left:648px;top:110.2px;font-size:5.376px;color:#333">Buscar</div>
<div class="a rb" style="left:648px;top:120.5px;font-size:5.692px;color:#333">Reemplazar</div>
<svg class="a" style="left:678.5px;top:122.3px" width="4" height="3" viewBox="0 0 4 3"><path d="M0.3 0.5 h3.4 l-1.7 2z" fill="#666"/></svg>
<div class="a rb" style="left:648px;top:130.5px;font-size:5.250px;color:#333">Seleccionar<i class="dd"></i></div>
<!-- THUMB PANEL -->
<div class="a" style="left:76px;top:147px;width:847px;height:355.5px;overflow:hidden">
 <div class="a" style="left:120px;top:0;width:7px;height:356px;background:#dedede"></div>
 <div class="a" style="left:120.6px;top:139px;width:6px;height:120px;background:#f4f4f4;border:0.5px solid #d8d8d8"></div>
 <div class="a" style="left:120.5px;top:2.3px;width:6px;height:5px;background:#fbfbfb"></div>
 <svg class="a" style="left:121.5px;top:3.5px" width="4" height="3" viewBox="0 0 4 3"><path d="M0.4 2.5 L2 0.8 L3.6 2.5z" fill="#555"/></svg>
 <div class="a" style="left:128px;top:0;width:0.8px;height:356px;background:#d2d2d2"></div>
 <!-- thumb 7 -->
 <div class="a th" style="left:15.9px;top:-25.6px">
  <svg width="96" height="54" viewBox="0 0 96 54">
   <rect x="14" y="29" width="67.6" height="5.6" fill="#9dbbd8"/><rect x="14" y="29" width="67.6" height="2" fill="#c6d8ea"/>
   <path d="M22 29 v21 M31 29 v21 M41 29 v21 M55.5 29 v21 M69 29 v21 M81 29 v21" stroke="#7a9ac8" stroke-width="0.5"/>
   <path d="M22 25 v4 M55.5 25 v4 M69 25 v4 M81 25 v4" stroke="#e03030" stroke-width="0.6" stroke-dasharray="1 1"/>
   <rect x="40.5" y="36.5" width="12.5" height="8" fill="#f8f080" stroke="#333" stroke-width="0.6"/>
   <rect x="56" y="36.5" width="13" height="6" fill="#f8f080" stroke="#333" stroke-width="0.6"/>
   <path d="M33 42 h4 M33 43.5 h4" stroke="#999" stroke-width="0.4"/>
   <g transform="translate(87.6,44.5)"><rect x="0" y="0" width="2.6" height="5" fill="#1a6fc0"/><rect x="2.6" y="0" width="2.6" height="5" fill="#e02828"/><rect x="5.2" y="0" width="2.8" height="5" fill="#ffd800"/><rect x="1" y="5.6" width="6" height="0.8" fill="#e08888"/></g>
  </svg>
 </div>
 <!-- thumb 8 -->
 <div class="a tn" style="left:5.6px;top:36.5px">8</div>
 <div class="a th" style="left:15.9px;top:37.2px">
  <div class="a" style="left:5.5px;top:2.6px;font-size:3.6px;line-height:4px;color:#e83a4a">Aportes de la Concertación a la Gestión Pública</div>
  <svg class="a" style="left:0;top:0" width="96" height="54" viewBox="0 0 96 54">
   <path d="M6 8.6 H84 M7 10.4 H84 M7 12.2 H26 M6 17 H84 M7 18.8 H21 M6 21.5 H62 M6 25 H65 M6 28.3 H60 M6 31.8 H68 M6 35 H79 M6 38.6 H84 M7 40.4 H84 M7 42.1 H17 " stroke="#a4a4a8" stroke-width="0.85" stroke-dasharray="3 0.7 2 0.7 4 0.7 1.5 0.7 2.5 0.7" fill="none"/>
   <g transform="translate(87.6,43.5)"><rect x="0" y="0" width="2.6" height="5" fill="#1a6fc0"/><rect x="2.6" y="0" width="2.6" height="5" fill="#e02828"/><rect x="5.2" y="0" width="2.8" height="5" fill="#ffd800"/><rect x="1" y="5.6" width="6" height="0.8" fill="#e08888"/></g>
  </svg>
 </div>
 <!-- thumb 9 -->
 <div class="a tn" style="left:5.6px;top:99.5px">9</div>
 <div class="a th" style="left:15.9px;top:100.7px">
  <svg width="96" height="54" viewBox="0 0 96 54">
   <path d="M22 3.8 h48" stroke="#8a8a8a" stroke-width="0.45"/>
   <path d="M9.5 8.5 h5.5" stroke="#555" stroke-width="0.7"/>
   <path d="M9.5 11.5 h77 M9.5 13 h63" stroke="#9a9aa4" stroke-width="0.45" stroke-dasharray="3 0.6"/>
   <path d="M36 16 h24" stroke="#777" stroke-width="0.45"/>
   <rect x="2.5" y="18.7" width="76.5" height="5.6" fill="#cdd9ee"/>
   <rect x="2.5" y="24.3" width="76.5" height="10.4" fill="#fbe2a4"/>
   <rect x="2.5" y="34.7" width="76.5" height="9.9" fill="#f7bdd6"/>
   <rect x="2.5" y="44.6" width="76.5" height="8.7" fill="#c4e2a6"/>
   <rect x="79" y="18.7" width="8" height="5.6" fill="#cdd9ee"/>
   <path d="M2.5 18.7 h84.5 v34.6" fill="none" stroke="#9aa8c0" stroke-width="0.3"/>
   <path d="M79 24.3 v29" stroke="#aaa" stroke-width="0.3"/>
   <path d="M11.5 18.7 v34.6 M28 18.7 v34.6 M34 18.7 v34.6 M40 18.7 v34.6 M49 18.7 v34.6 M58 18.7 v34.6 M69 18.7 v34.6" stroke="#a8b0c0" stroke-width="0.3"/>
   <path d="M28 27.5 h51 M28 31 h51 M28 38 h51 M28 41.5 h51 M2.5 49 h76.5" stroke="#c8b890" stroke-width="0.25"/>
   <path d="M6 21.5 h3 M14 21.5 h8 M30 21.5 h3 M42 21.5 h5 M51 21.5 h5 M60 21.5 h7 M71 21.5 h6 M81 21 h5 M81 22.5 h5" stroke="#667" stroke-width="0.4"/>
   <path d="M13 26 h10 M13 29 h10 M13 33 h14 M29 26 h4 M35 26 h4 M41 26 h6 M50 26 h6 M59 26 h8 M70 26 h8 M29 29 h4 M35 29 h4 M41 29 h6 M50 29 h6 M59 29 h6 M70 29 h8 M12 37 h13 M12 40 h12 M12 43 h10 M29 37 h4 M35 37 h4 M41 37 h6 M50 37 h6 M59 37 h8 M70 37 h8 M29 40 h4 M35 40 h4 M41 40 h6 M50 40 h6 M59 40 h8 M70 40 h8 M12 47 h14 M12 51.5 h12 M29 47 h4 M41 47 h6 M50 47 h6 M59 47 h8 M70 47 h8 M29 51.5 h4 M41 51.5 h6 M50 51.5 h6 M59 51.5 h6 M70 51.5 h8 M5 29 h3 M4 39 h5 M4 47 h5 M3 51.5 h5" stroke="#8a8070" stroke-width="0.35"/>
   <path d="M81 36 h5 M81 37.5 h4" stroke="#999" stroke-width="0.35"/>
   <g transform="translate(87.5,44.5)"><rect x="0" y="0" width="2.6" height="5.3" fill="#1a6fc0"/><rect x="2.6" y="0" width="2.6" height="5.3" fill="#e02828"/><rect x="5.2" y="0" width="2.8" height="5.3" fill="#ffd800"/><rect x="1" y="5.8" width="6" height="0.8" fill="#e08888"/></g>
  </svg>
 </div>
<!-- thumb 10 selected -->
 <div class="a tn" style="left:3.2px;top:162.5px;color:#c8462a">10</div>
 <div class="a" style="left:14.8px;top:162.4px;width:97.8px;height:56.3px;border:1.7px solid #ee6f4f;background:#fff"></div>
 <div class="a th" style="left:15.9px;top:163.5px;box-shadow:none">
 <div class="a" style="left:0;top:0;width:624px;height:351px;transform:scale(0.15387);transform-origin:0 0"><div class="a" style="left:-254.4px;top:-166.8px;width:1000px;height:563px"><div class="a" style="left:294.60px;top:193.60px;width:551.10px;height:1.4px;background:#a0a0a0"></div>
<div class="a" style="left:294.60px;top:204.90px;width:551.10px;height:1.4px;background:#a0a0a0"></div>
<div class="a" style="left:294.60px;top:227.10px;width:551.10px;height:1.4px;background:#a0a0a0"></div>
<div class="a" style="left:294.60px;top:245.10px;width:551.10px;height:1.4px;background:#a0a0a0"></div>
<div class="a" style="left:294.60px;top:256.30px;width:551.10px;height:1.4px;background:#a0a0a0"></div>
<div class="a" style="left:294.60px;top:284.90px;width:551.10px;height:1.4px;background:#a0a0a0"></div>
<div class="a" style="left:294.60px;top:313.80px;width:551.10px;height:1.4px;background:#a0a0a0"></div>
<div class="a" style="left:294.60px;top:356.00px;width:551.10px;height:1.4px;background:#a0a0a0"></div>
<div class="a" style="left:294.60px;top:365.90px;width:551.10px;height:1.4px;background:#a0a0a0"></div>
<div class="a" style="left:294.60px;top:387.90px;width:551.10px;height:1.4px;background:#a0a0a0"></div>
<div class="a" style="left:294.60px;top:403.00px;width:551.10px;height:1.4px;background:#a0a0a0"></div>
<div class="a" style="left:294.60px;top:473.60px;width:551.10px;height:1.4px;background:#a0a0a0"></div>
<div class="a" style="left:294.60px;top:484.90px;width:551.10px;height:1.4px;background:#a0a0a0"></div>
<div class="a" style="left:294.20px;top:194.00px;width:1.4px;height:291.30px;background:#a0a0a0"></div>
<div class="a" style="left:845.30px;top:194.00px;width:1.4px;height:291.30px;background:#a0a0a0"></div>
<div class="a" style="left:321.10px;top:205.30px;width:1.4px;height:280.00px;background:#a0a0a0"></div>
<div class="a" style="left:429.60px;top:205.30px;width:1.4px;height:280.00px;background:#a0a0a0"></div>
<div class="a" style="left:612.20px;top:205.30px;width:1.4px;height:280.00px;background:#a0a0a0"></div>
<div class="a" style="left:780.10px;top:205.30px;width:1.4px;height:280.00px;background:#a0a0a0"></div><div class="a tt" style="left:367.40px;top:182.57px;font-size:9.130px;line-height:10.96px;transform:scaleX(0.9091);transform-origin:0 50%;font-weight:bold;color:#111">METODOLOGÍA DEL TALLER – RECOJO DE PROPUESTAS EN EL GRUPO DE TRABAJO</div>
<div class="a" style="left:548.8px;top:195px;width:42.5px;height:9.6px;background:#ffff00"></div>
<div class="a tt" style="left:550.20px;top:195.10px;font-size:7.425px;line-height:8.91px;transform:scaleX(0.9091);transform-origin:0 50%;font-weight:bold;color:#111">EJE: SALUD</div>
<div class="a tt" style="left:295.20px;top:211.70px;font-size:8.030px;line-height:9.64px;transform:scaleX(0.9091);transform-origin:0 50%;font-weight:bold;color:#111">N°</div>
<div class="a tt" style="left:354.60px;top:211.66px;font-size:8.085px;line-height:9.70px;transform:scaleX(0.9091);transform-origin:0 50%;font-weight:bold;color:#111">PROBLEMA</div>
<div class="a tt" style="left:484.80px;top:211.63px;font-size:8.140px;line-height:9.77px;transform:scaleX(0.9091);transform-origin:0 50%;font-weight:bold;color:#111">SITUACIÓN ACTUAL</div>
<div class="a tt" style="left:674.40px;top:211.70px;font-size:8.030px;line-height:9.64px;transform:scaleX(0.9091);transform-origin:0 50%;font-weight:bold;color:#111">PROPUESTA</div>
<div class="a tt" style="left:787.30px;top:206.10px;font-size:8.184px;line-height:9.82px;transform:scaleX(0.9091);transform-origin:0 50%;font-weight:bold;color:#111">PRIORIDADES</div>
<div class="a tt" style="left:793.50px;top:217.80px;font-size:8.184px;line-height:9.82px;transform:scaleX(0.9091);transform-origin:0 50%;font-weight:bold;color:#111">(enumere)</div>
<div class="a tt" style="left:307.70px;top:233.02px;font-size:5.724px;line-height:6.87px;transform:scaleX(0.9259);transform-origin:0 50%;">1</div>
<div class="a tt" style="left:307.70px;top:248.22px;font-size:5.724px;line-height:6.87px;transform:scaleX(0.9259);transform-origin:0 50%;">2</div>
<div class="a tt" style="left:307.70px;top:267.52px;font-size:5.724px;line-height:6.87px;transform:scaleX(0.9259);transform-origin:0 50%;">3</div>
<div class="a tt" style="left:307.70px;top:296.22px;font-size:5.724px;line-height:6.87px;transform:scaleX(0.9259);transform-origin:0 50%;">4</div>
<div class="a tt" style="left:307.70px;top:332.22px;font-size:5.724px;line-height:6.87px;transform:scaleX(0.9259);transform-origin:0 50%;">5</div>
<div class="a tt" style="left:307.70px;top:358.22px;font-size:5.724px;line-height:6.87px;transform:scaleX(0.9259);transform-origin:0 50%;">6</div>
<div class="a tt" style="left:307.70px;top:374.22px;font-size:5.724px;line-height:6.87px;transform:scaleX(0.9259);transform-origin:0 50%;">7</div>
<div class="a tt" style="left:307.70px;top:392.92px;font-size:5.724px;line-height:6.87px;transform:scaleX(0.9259);transform-origin:0 50%;">8</div>
<div class="a tt" style="left:307.70px;top:435.92px;font-size:5.724px;line-height:6.87px;transform:scaleX(0.9259);transform-origin:0 50%;">9</div>
<div class="a tt" style="left:306.30px;top:476.22px;font-size:5.724px;line-height:6.87px;transform:scaleX(0.9259);transform-origin:0 50%;">10</div>
<div class="a tt" style="left:323.90px;top:239.10px;font-size:5.454px;line-height:6.54px;transform:scaleX(0.9259);transform-origin:0 50%;">Desnutrición crónica INEI-ENDES PPR 2021/P</div>
<div class="a tt" style="left:339.00px;top:248.87px;font-size:5.346px;line-height:6.42px;transform:scaleX(0.9259);transform-origin:0 50%;">Anemia INEI-ENDES PPR 2021/P</div>
<div class="a tt" style="left:323.00px;top:256.98px;font-size:5.940px;line-height:7.13px;transform:scaleX(0.9259);transform-origin:0 50%;">Mortalidad materna</div>
<div class="a tt" style="left:321.50px;top:264.29px;font-size:5.616px;line-height:6.74px;transform:scaleX(0.9259);transform-origin:0 50%;"><b>Fuente:</b> Centro Nacional de Epidemiología,</div>
<div class="a tt" style="left:321.50px;top:271.29px;font-size:5.616px;line-height:6.74px;transform:scaleX(0.9259);transform-origin:0 50%;">Prevención y Control de enfermedades -</div>
<div class="a tt" style="left:321.50px;top:278.29px;font-size:5.616px;line-height:6.74px;transform:scaleX(0.9259);transform-origin:0 50%;">MINSA. (*) Hasta la SE 30-2020</div>
<div class="a tt" style="left:322.50px;top:300.33px;font-size:5.562px;line-height:6.67px;transform:scaleX(0.9259);transform-origin:0 50%;">Agua tratada, segura y saneamiento&nbsp; básico</div>
<div class="a tt" style="left:321.50px;top:306.93px;font-size:5.562px;line-height:6.67px;transform:scaleX(0.9259);transform-origin:0 50%;">INEI-ENDES PPR 2021/P</div>
<div class="a tt" style="left:322.90px;top:328.32px;font-size:5.573px;line-height:6.69px;transform:scaleX(0.9259);transform-origin:0 50%;">Embarazo en adolescentes:</div>
<div class="a tt" style="left:321.80px;top:335.52px;font-size:5.573px;line-height:6.69px;transform:scaleX(0.9259);transform-origin:0 50%;">- De 11 a 14 años</div>
<div class="a tt" style="left:321.80px;top:349.32px;font-size:5.573px;line-height:6.69px;transform:scaleX(0.9259);transform-origin:0 50%;">- De 15 a 19 años</div>
<div class="a tt" style="left:321.80px;top:359.92px;font-size:5.573px;line-height:6.69px;transform:scaleX(0.9259);transform-origin:0 50%;">VIH SIDA</div>
<div class="a tt" style="left:323.00px;top:381.12px;font-size:5.573px;line-height:6.69px;transform:scaleX(0.9259);transform-origin:0 50%;">TBC (Primer semestre 2021)</div>
<div class="a tt" style="left:323.00px;top:396.99px;font-size:5.616px;line-height:6.74px;transform:scaleX(0.9259);transform-origin:0 50%;">Metaxénicas: Dengue y Zika</div>
<div class="a tt" style="left:321.50px;top:425.16px;font-size:5.368px;line-height:6.44px;transform:scaleX(0.9259);transform-origin:0 50%;"><b><i>Enfermedades no transmisibles</i></b></div>
<div class="a tt" style="left:321.80px;top:432.36px;font-size:5.508px;line-height:6.61px;transform:scaleX(0.9259);transform-origin:0 50%;">Personas de 15 y más años de edad con</div>
<div class="a tt" style="left:321.80px;top:439.41px;font-size:5.508px;line-height:6.61px;transform:scaleX(0.9259);transform-origin:0 50%;">diagnóstico de hipertensión</div>
<div class="a tt" style="left:321.80px;top:446.46px;font-size:5.508px;line-height:6.61px;transform:scaleX(0.9259);transform-origin:0 50%;">Personas de 15 y más años de edad con</div>
<div class="a tt" style="left:321.80px;top:453.51px;font-size:5.508px;line-height:6.61px;transform:scaleX(0.9259);transform-origin:0 50%;">diagnóstico de diabetes mellitus</div>
<div class="a tt" style="left:321.80px;top:460.56px;font-size:5.508px;line-height:6.61px;transform:scaleX(0.9259);transform-origin:0 50%;">Personas de 15 y más años de edad con</div>
<div class="a tt" style="left:321.80px;top:467.61px;font-size:5.508px;line-height:6.61px;transform:scaleX(0.9259);transform-origin:0 50%;">obesidad</div>
<div class="a tt" style="left:432.00px;top:238.59px;font-size:5.465px;line-height:6.56px;transform:scaleX(0.9259);transform-origin:0 50%;">2020: 5.9%;</div>
<div class="a tt" style="left:477.00px;top:238.59px;font-size:5.465px;line-height:6.56px;transform:scaleX(0.9259);transform-origin:0 50%;">2021: 4.4%</div>
<div class="a tt" style="left:432.00px;top:248.99px;font-size:5.465px;line-height:6.56px;transform:scaleX(0.9259);transform-origin:0 50%;">2020: 35.8%;</div>
<div class="a tt" style="left:477.00px;top:248.99px;font-size:5.465px;line-height:6.56px;transform:scaleX(0.9259);transform-origin:0 50%;">2021: 36.3%</div>
<div class="a tt" style="left:432.00px;top:271.39px;font-size:5.465px;line-height:6.56px;transform:scaleX(0.9259);transform-origin:0 50%;">2019: 10;</div>
<div class="a tt" style="left:524.00px;top:271.39px;font-size:5.465px;line-height:6.56px;transform:scaleX(0.9259);transform-origin:0 50%;">2020: 10 &nbsp; 2021: 16 &nbsp; 2022</div>
<div class="a" style="left:585.8px;top:271.2px;width:0.5px;height:6.4px;background:#222"></div>
<div class="a tt" style="left:431.60px;top:299.93px;font-size:5.562px;line-height:6.67px;transform:scaleX(0.9259);transform-origin:0 50%;">Agua tratada: 2020: 99.2% &nbsp; &nbsp; 2021: 99.2%</div>
<div class="a tt" style="left:430.00px;top:306.90px;font-size:5.605px;line-height:6.73px;transform:scaleX(0.9259);transform-origin:0 50%;">Saneamiento básico: 2020: 96.9%; 2021: 96.4%</div>
<div class="a tt" style="left:430.50px;top:335.56px;font-size:5.508px;line-height:6.61px;transform:scaleX(0.9259);transform-origin:0 50%;">2020: 28</div>
<div class="a tt" style="left:475.30px;top:335.56px;font-size:5.508px;line-height:6.61px;transform:scaleX(0.9259);transform-origin:0 50%;">2021: 33 (aumentó en 15%)</div>
<div class="a tt" style="left:430.50px;top:349.36px;font-size:5.508px;line-height:6.61px;transform:scaleX(0.9259);transform-origin:0 50%;">2020: 1,559</div>
<div class="a tt" style="left:475.30px;top:349.36px;font-size:5.508px;line-height:6.61px;transform:scaleX(0.9259);transform-origin:0 50%;">2021: 1,364 (se redujo en 15%)</div>
<div class="a tt" style="left:431.00px;top:374.39px;font-size:5.465px;line-height:6.56px;transform:scaleX(0.9259);transform-origin:0 50%;">A nivel de DIRESA Ica:</div>
<div class="a tt" style="left:432.00px;top:381.19px;font-size:5.465px;line-height:6.56px;transform:scaleX(0.9259);transform-origin:0 50%;">2020: 389</div>
<div class="a tt" style="left:524.00px;top:381.19px;font-size:5.465px;line-height:6.56px;transform:scaleX(0.9259);transform-origin:0 50%;">2021: 313</div>
<div class="a tt" style="left:430.50px;top:410.96px;font-size:5.508px;line-height:6.61px;transform:scaleX(0.9259);transform-origin:0 50%;">Región Ica según</div>
<div class="a tt" style="left:430.50px;top:418.16px;font-size:5.508px;line-height:6.61px;transform:scaleX(0.9259);transform-origin:0 50%;">2019: 9.1%</div>
<div class="a tt" style="left:430.50px;top:425.06px;font-size:5.508px;line-height:6.61px;transform:scaleX(0.9259);transform-origin:0 50%;">2020: 9.5%</div>
<div class="a tt" style="left:430.50px;top:439.06px;font-size:5.508px;line-height:6.61px;transform:scaleX(0.9259);transform-origin:0 50%;">2019: 4.8%</div>
<div class="a tt" style="left:430.50px;top:446.16px;font-size:5.508px;line-height:6.61px;transform:scaleX(0.9259);transform-origin:0 50%;">2020: 5.2%</div>
<div class="a tt" style="left:430.50px;top:460.16px;font-size:5.508px;line-height:6.61px;transform:scaleX(0.9259);transform-origin:0 50%;">2019: 31.9%</div>
<div class="a tt" style="left:430.50px;top:466.96px;font-size:5.508px;line-height:6.61px;transform:scaleX(0.9259);transform-origin:0 50%;">2020: 33.5%</div>
<div class="a tt" style="left:691.30px;top:238.53px;font-size:4.644px;line-height:5.57px;transform:scaleX(0.9259);transform-origin:0 50%;">4.4%</div>
<div class="a tt" style="left:690.20px;top:248.93px;font-size:4.644px;line-height:5.57px;transform:scaleX(0.9259);transform-origin:0 50%;">34.0%</div>
<div class="a tt" style="left:613.00px;top:422.82px;font-size:5.724px;line-height:6.87px;transform:scaleX(0.9259);transform-origin:0 50%;">2022: 9.0% (Hipertensión)</div>
<div class="a tt" style="left:613.00px;top:437.82px;font-size:5.724px;line-height:6.87px;transform:scaleX(0.9259);transform-origin:0 50%;">2022: 5.0% (Diabetes)</div>
<div class="a tt" style="left:613.00px;top:460.22px;font-size:5.724px;line-height:6.87px;transform:scaleX(0.9259);transform-origin:0 50%;">2022: 32.0% (Obesidad)</div>
<div class="a tt" style="left:295.90px;top:494.49px;font-size:5.778px;line-height:6.93px;transform:scaleX(0.9259);transform-origin:0 50%;"><span style="color:#e02020">*</span>Se pueden considerar los indicadores que ya se han venido trabajando y haciendo el seguimiento en el Acuerdo de Gobernabilidad vigente</div>
<div class="a" style="left:849px;top:484.8px;width:25px;height:18px;overflow:hidden"><div class="a" style="left:0;top:0;width:8px;height:18px;background:#1a6fc0;border-radius:1px 0 0 0"></div><div class="a" style="left:8px;top:0;width:8px;height:18px;background:#e02828"></div><div class="a" style="left:16px;top:0;width:9px;height:18px;background:#ffd800"></div><svg class="a" style="left:0;top:0" width="25" height="18" viewBox="0 0 25 18"><path d="M4 1 C2 6 3 12 7 18 M12 1 C10 6 11 12 15 18 M20 1 C18 6 19 12 23 18" stroke="#fff" stroke-width="0.8" fill="none"/><circle cx="6" cy="6" r="0.6" fill="#fff"/><circle cx="14" cy="6" r="0.6" fill="#fff"/><circle cx="22" cy="6" r="0.6" fill="#fff"/></svg></div></div></div>
 </div>
<!-- thumb 11 -->
 <div class="a tn" style="left:3.2px;top:225.5px">11</div>
 <div class="a th" style="left:15.9px;top:226.9px">
  <svg width="96" height="54" viewBox="0 0 96 54">
   <path d="M21 3.5 h54" stroke="#777" stroke-width="0.5"/>
   <rect x="3.3" y="6.6" width="82.5" height="44" fill="none" stroke="#8a8a8a" stroke-width="0.3"/>
   <path d="M3.3 8.8 h82.5 M3.3 11.3 h82.5 M3.3 13.9 h82.5 M3.3 16.3 h82.5" stroke="#bbb" stroke-width="0.25"/>
   <path d="M46 7.8 h4 M31 10.3 h28" stroke="#888" stroke-width="0.45"/><rect x="40.5" y="12.5" width="12" height="2" fill="#f2f040"/>
   <path d="M7.1 16.3 v34.3 M29.7 16.3 v34.3 M56.5 16.3 v34.3 M76.5 16.3 v34.3" stroke="#888" stroke-width="0.3"/>
   <path d="M3.3 19.6 h82.5 M3.3 24.7 h82.5 M3.3 35.5 h82.5 M3.3 39.4 h82.5 M3.3 42.4 h82.5 M3.3 45.4 h82.5 M3.3 48.2 h82.5" stroke="#999" stroke-width="0.25"/>
   <path d="M13 18 h8 M36 18 h14 M62 18 h6 M78 17.5 h7 M79 19 h5" stroke="#555" stroke-width="0.45"/>
   <path d="M9 22 h20 M9 23.5 h14 M31 21 h18 M31 22.3 h20 M31 23.6 h16 M31 25.9 h20 M31 27.5 h22 M31 29 h16 M31 32 h18 M31 33.5 h20 M31 35 h6 M9 30 h10 M9 31.3 h16 M9 32.8 h4 M9 38 h18 M9 39 h6 M9 41 h14 M9 44 h14 M4.5 50 h1" stroke="#aaa" stroke-width="0.35"/>
   <path d="M4 52.2 h70" stroke="#bbb" stroke-width="0.35" stroke-dasharray="2 0.5"/>
   <g transform="translate(87.5,42.8)"><rect x="0" y="0" width="2.6" height="6" fill="#1a6fc0"/><rect x="2.6" y="0" width="2.6" height="6" fill="#e02828"/><rect x="5.2" y="0" width="2.8" height="6" fill="#ffd800"/><rect x="1" y="6.8" width="6" height="0.8" fill="#e08888"/></g>
  </svg>
 </div>
 <!-- thumb 12 -->
 <div class="a tn" style="left:3.2px;top:288.5px">12</div>
 <div class="a th" style="left:15.9px;top:289.4px">
  <svg width="96" height="54" viewBox="0 0 96 54">
   <path d="M18 4.2 h59" stroke="#888" stroke-width="0.5"/>
   <rect x="3.3" y="6.2" width="82.2" height="44.8" fill="none" stroke="#8a8a8a" stroke-width="0.3"/>
   <path d="M3.3 8.8 h82.2 M3.3 11.6 h82.2 M3.3 14.3 h82.2 M3.3 17 h82.2" stroke="#bbb" stroke-width="0.25"/>
   <path d="M45 7.5 h4 M26 10.3 h38" stroke="#888" stroke-width="0.45"/><rect x="22" y="12.5" width="41" height="2" fill="#f2f040"/><path d="M23 13.5 h39" stroke="#888" stroke-width="0.35"/>
   <path d="M7 17 v34 M33.5 17 v34 M58.9 17 v34 M77.6 17 v34" stroke="#888" stroke-width="0.3"/>
   <path d="M3.3 20.5 h82.2 M3.3 27.4 h82.2 M3.3 35.4 h82.2 M3.3 43.3 h82.2" stroke="#999" stroke-width="0.25"/>
   <path d="M13 18.8 h8 M41 18.8 h11 M62 18.8 h6 M79 18 h6 M79 19.5 h5" stroke="#555" stroke-width="0.45"/>
   <path d="M9 22.8 h22 M9 24 h20 M9 25.3 h6 M35 22 h18 M35 23.2 h4 M35 24.5 h18 M35 25.7 h4 M9 29.7 h20 M9 32.3 h16 M35 29.7 h22 M35 32.3 h14 M9 37.8 h16 M35 36.7 h22 M35 38 h18 M35 39.5 h22 M35 41 h18 M9 44.8 h22 M9 46 h20 M9 47.3 h8 M9 49 h22 M35 45.2 h20 M35 46.4 h6" stroke="#aaa" stroke-width="0.35"/>
   <path d="M4 52.2 h66" stroke="#bbb" stroke-width="0.35" stroke-dasharray="2 0.5"/>
   <g transform="translate(87.5,43)"><rect x="0" y="0" width="2.6" height="6" fill="#1a6fc0"/><rect x="2.6" y="0" width="2.6" height="6" fill="#e02828"/><rect x="5.2" y="0" width="2.8" height="6" fill="#ffd800"/><rect x="1" y="6.8" width="6" height="0.8" fill="#e08888"/></g>
  </svg>
 </div>
<div class="a tn" style="left:3.2px;top:351.5px">13</div>
 <div class="a th" style="left:15.9px;top:352.2px"></div>

 <!-- rulers -->
 <div class="a" style="left:131px;top:2.3px;width:6.6px;height:5.7px;background:#fff;border:0.5px solid #d0d0d0"></div>
 <svg class="a" style="left:132.5px;top:3.5px" width="4" height="4" viewBox="0 0 4 4"><path d="M1 0.5 v2.7 h2.5" stroke="#555" stroke-width="0.5" fill="none"/></svg>
 <div class="a" style="left:179px;top:2.6px;width:175.5px;height:5.6px;background:#d2d2d2"></div>
 <div class="a" style="left:354.5px;top:2.6px;width:181.5px;height:5.6px;background:#fafafa"></div>
 <div class="a" style="left:536px;top:2.6px;width:265.6px;height:5.6px;background:#d2d2d2"></div>
 <div class="a" style="left:132px;top:20px;width:5.6px;height:104px;background:#d2d2d2"></div>
 <div class="a" style="left:132px;top:124px;width:5.6px;height:13.5px;background:#fafafa"></div>
 <div class="a" style="left:132px;top:137.5px;width:5.6px;height:220px;background:#d2d2d2"></div>
 <div id="hruler"></div>
 <div id="vruler"></div>

 <!-- right scrollbar -->
 <div class="a" style="left:840.4px;top:0;width:6.6px;height:356px;background:#dcdcdc"></div>
 <div class="a" style="left:840.4px;top:2.3px;width:6px;height:5px;background:#fbfbfb"></div>
 <svg class="a" style="left:841.5px;top:3.5px" width="4" height="3" viewBox="0 0 4 3"><path d="M0.4 2.5 L2 0.8 L3.6 2.5z" fill="#555"/></svg>
 <div class="a" style="left:841px;top:177px;width:5.4px;height:19.7px;background:#f8f8f8;border:0.5px solid #d0d0d0"></div>
 <div class="a" style="left:840.4px;top:348px;width:6px;height:5px;background:#fbfbfb"></div>
 <svg class="a" style="left:841.5px;top:349px" width="4" height="3" viewBox="0 0 4 3"><path d="M0.4 0.5 L2 2.2 L3.6 0.5z" fill="#555"/></svg>

 <!-- SLIDE -->
 <div class="a" id="slide" style="left:178.4px;top:19.8px;width:624px;height:340px;background:#fff;box-shadow:0 0 0.8px #bbb"></div>
</div>
<div class="a" style="left:76px;top:147px;width:847px;height:355.5px;overflow:hidden"><div class="a" style="left:-76px;top:-147px;width:1000px;height:563px">
<div class="a rn" style="left:409.20px;top:149.6px;width:6px">1</div>
<div class="a rn" style="left:390.90px;top:149.6px;width:6px">2</div>
<div class="a rn" style="left:372.60px;top:149.6px;width:6px">3</div>
<div class="a rn" style="left:354.30px;top:149.6px;width:6px">4</div>
<div class="a rn" style="left:336.00px;top:149.6px;width:6px">5</div>
<div class="a rn" style="left:317.70px;top:149.6px;width:6px">6</div>
<div class="a rn" style="left:299.40px;top:149.6px;width:6px">7</div>
<div class="a rn" style="left:281.10px;top:149.6px;width:6px">8</div>
<div class="a rn" style="left:262.80px;top:149.6px;width:6px">9</div>
<div class="a rn" style="left:444.80px;top:149.6px;width:8px">1</div>
<div class="a rn" style="left:463.10px;top:149.6px;width:8px">2</div>
<div class="a rn" style="left:481.40px;top:149.6px;width:8px">3</div>
<div class="a rn" style="left:499.70px;top:149.6px;width:8px">4</div>
<div class="a rn" style="left:518.00px;top:149.6px;width:8px">5</div>
<div class="a rn" style="left:536.30px;top:149.6px;width:8px">6</div>
<div class="a rn" style="left:554.60px;top:149.6px;width:8px">7</div>
<div class="a rn" style="left:572.90px;top:149.6px;width:8px">8</div>
<div class="a rn" style="left:591.20px;top:149.6px;width:8px">9</div>
<div class="a rn" style="left:609.50px;top:149.6px;width:8px">10</div>
<div class="a rn" style="left:627.80px;top:149.6px;width:8px">11</div>
<div class="a rn" style="left:646.10px;top:149.6px;width:8px">12</div>
<div class="a rn" style="left:664.40px;top:149.6px;width:8px">13</div>
<div class="a rn" style="left:682.70px;top:149.6px;width:8px">14</div>
<div class="a rn" style="left:701.00px;top:149.6px;width:8px">15</div>
<div class="a rn" style="left:719.30px;top:149.6px;width:8px">16</div>
<div class="a rn" style="left:737.60px;top:149.6px;width:8px">17</div>
<div class="a rn" style="left:755.90px;top:149.6px;width:8px">18</div>
<div class="a rn" style="left:774.20px;top:149.6px;width:8px">19</div>
<div class="a rn" style="left:792.50px;top:149.6px;width:8px">20</div>
<div class="a rn" style="left:810.80px;top:149.6px;width:8px">21</div>
<div class="a rn" style="left:829.10px;top:149.6px;width:8px">22</div>
<div class="a rn" style="left:847.40px;top:149.6px;width:8px">23</div>
<div class="a rn" style="left:865.70px;top:149.6px;width:8px">24</div>
<div class="a" style="left:270.02px;top:152.1px;width:0.7px;height:0.7px;background:#8a8a8a"></div>
<div class="a" style="left:274.65px;top:151.3px;width:0.7px;height:2.2px;background:#8a8a8a"></div>
<div class="a" style="left:279.17px;top:152.1px;width:0.7px;height:0.7px;background:#8a8a8a"></div>
<div class="a" style="left:288.32px;top:152.1px;width:0.7px;height:0.7px;background:#8a8a8a"></div>
<div class="a" style="left:292.95px;top:151.3px;width:0.7px;height:2.2px;background:#8a8a8a"></div>
<div class="a" style="left:297.47px;top:152.1px;width:0.7px;height:0.7px;background:#8a8a8a"></div>
<div class="a" style="left:306.62px;top:152.1px;width:0.7px;height:0.7px;background:#8a8a8a"></div>
<div class="a" style="left:311.25px;top:151.3px;width:0.7px;height:2.2px;background:#8a8a8a"></div>
<div class="a" style="left:315.77px;top:152.1px;width:0.7px;height:0.7px;background:#8a8a8a"></div>
<div class="a" style="left:324.92px;top:152.1px;width:0.7px;height:0.7px;background:#8a8a8a"></div>
<div class="a" style="left:329.55px;top:151.3px;width:0.7px;height:2.2px;background:#8a8a8a"></div>
<div class="a" style="left:334.07px;top:152.1px;width:0.7px;height:0.7px;background:#8a8a8a"></div>
<div class="a" style="left:343.22px;top:152.1px;width:0.7px;height:0.7px;background:#8a8a8a"></div>
<div class="a" style="left:347.85px;top:151.3px;width:0.7px;height:2.2px;background:#8a8a8a"></div>
<div class="a" style="left:352.38px;top:152.1px;width:0.7px;height:0.7px;background:#8a8a8a"></div>
<div class="a" style="left:361.52px;top:152.1px;width:0.7px;height:0.7px;background:#8a8a8a"></div>
<div class="a" style="left:366.15px;top:151.3px;width:0.7px;height:2.2px;background:#8a8a8a"></div>
<div class="a" style="left:370.67px;top:152.1px;width:0.7px;height:0.7px;background:#8a8a8a"></div>
<div class="a" style="left:379.82px;top:152.1px;width:0.7px;height:0.7px;background:#8a8a8a"></div>
<div class="a" style="left:384.45px;top:151.3px;width:0.7px;height:2.2px;background:#8a8a8a"></div>
<div class="a" style="left:388.97px;top:152.1px;width:0.7px;height:0.7px;background:#8a8a8a"></div>
<div class="a" style="left:398.12px;top:152.1px;width:0.7px;height:0.7px;background:#8a8a8a"></div>
<div class="a" style="left:402.75px;top:151.3px;width:0.7px;height:2.2px;background:#8a8a8a"></div>
<div class="a" style="left:407.27px;top:152.1px;width:0.7px;height:0.7px;background:#8a8a8a"></div>
<div class="a" style="left:416.42px;top:152.1px;width:0.7px;height:0.7px;background:#8a8a8a"></div>
<div class="a" style="left:421.05px;top:151.3px;width:0.7px;height:2.2px;background:#8a8a8a"></div>
<div class="a" style="left:425.57px;top:152.1px;width:0.7px;height:0.7px;background:#8a8a8a"></div>
<div class="a" style="left:434.72px;top:152.1px;width:0.7px;height:0.7px;background:#8a8a8a"></div>
<div class="a" style="left:439.35px;top:151.3px;width:0.7px;height:2.2px;background:#8a8a8a"></div>
<div class="a" style="left:443.88px;top:152.1px;width:0.7px;height:0.7px;background:#8a8a8a"></div>
<div class="a" style="left:453.02px;top:152.1px;width:0.7px;height:0.7px;background:#8a8a8a"></div>
<div class="a" style="left:457.65px;top:151.3px;width:0.7px;height:2.2px;background:#8a8a8a"></div>
<div class="a" style="left:462.17px;top:152.1px;width:0.7px;height:0.7px;background:#8a8a8a"></div>
<div class="a" style="left:471.32px;top:152.1px;width:0.7px;height:0.7px;background:#8a8a8a"></div>
<div class="a" style="left:475.95px;top:151.3px;width:0.7px;height:2.2px;background:#8a8a8a"></div>
<div class="a" style="left:480.47px;top:152.1px;width:0.7px;height:0.7px;background:#8a8a8a"></div>
<div class="a" style="left:489.62px;top:152.1px;width:0.7px;height:0.7px;background:#8a8a8a"></div>
<div class="a" style="left:494.25px;top:151.3px;width:0.7px;height:2.2px;background:#8a8a8a"></div>
<div class="a" style="left:498.77px;top:152.1px;width:0.7px;height:0.7px;background:#8a8a8a"></div>
<div class="a" style="left:507.92px;top:152.1px;width:0.7px;height:0.7px;background:#8a8a8a"></div>
<div class="a" style="left:512.55px;top:151.3px;width:0.7px;height:2.2px;background:#8a8a8a"></div>
<div class="a" style="left:517.07px;top:152.1px;width:0.7px;height:0.7px;background:#8a8a8a"></div>
<div class="a" style="left:526.23px;top:152.1px;width:0.7px;height:0.7px;background:#8a8a8a"></div>
<div class="a" style="left:530.85px;top:151.3px;width:0.7px;height:2.2px;background:#8a8a8a"></div>
<div class="a" style="left:535.38px;top:152.1px;width:0.7px;height:0.7px;background:#8a8a8a"></div>
<div class="a" style="left:544.52px;top:152.1px;width:0.7px;height:0.7px;background:#8a8a8a"></div>
<div class="a" style="left:549.15px;top:151.3px;width:0.7px;height:2.2px;background:#8a8a8a"></div>
<div class="a" style="left:553.67px;top:152.1px;width:0.7px;height:0.7px;background:#8a8a8a"></div>
<div class="a" style="left:562.82px;top:152.1px;width:0.7px;height:0.7px;background:#8a8a8a"></div>
<div class="a" style="left:567.45px;top:151.3px;width:0.7px;height:2.2px;background:#8a8a8a"></div>
<div class="a" style="left:571.98px;top:152.1px;width:0.7px;height:0.7px;background:#8a8a8a"></div>
<div class="a" style="left:581.12px;top:152.1px;width:0.7px;height:0.7px;background:#8a8a8a"></div>
<div class="a" style="left:585.75px;top:151.3px;width:0.7px;height:2.2px;background:#8a8a8a"></div>
<div class="a" style="left:590.27px;top:152.1px;width:0.7px;height:0.7px;background:#8a8a8a"></div>
<div class="a" style="left:599.42px;top:152.1px;width:0.7px;height:0.7px;background:#8a8a8a"></div>
<div class="a" style="left:604.05px;top:151.3px;width:0.7px;height:2.2px;background:#8a8a8a"></div>
<div class="a" style="left:608.57px;top:152.1px;width:0.7px;height:0.7px;background:#8a8a8a"></div>
<div class="a" style="left:617.73px;top:152.1px;width:0.7px;height:0.7px;background:#8a8a8a"></div>
<div class="a" style="left:622.35px;top:151.3px;width:0.7px;height:2.2px;background:#8a8a8a"></div>
<div class="a" style="left:626.88px;top:152.1px;width:0.7px;height:0.7px;background:#8a8a8a"></div>
<div class="a" style="left:636.02px;top:152.1px;width:0.7px;height:0.7px;background:#8a8a8a"></div>
<div class="a" style="left:640.65px;top:151.3px;width:0.7px;height:2.2px;background:#8a8a8a"></div>
<div class="a" style="left:645.17px;top:152.1px;width:0.7px;height:0.7px;background:#8a8a8a"></div>
<div class="a" style="left:654.32px;top:152.1px;width:0.7px;height:0.7px;background:#8a8a8a"></div>
<div class="a" style="left:658.95px;top:151.3px;width:0.7px;height:2.2px;background:#8a8a8a"></div>
<div class="a" style="left:663.48px;top:152.1px;width:0.7px;height:0.7px;background:#8a8a8a"></div>
<div class="a" style="left:672.62px;top:152.1px;width:0.7px;height:0.7px;background:#8a8a8a"></div>
<div class="a" style="left:677.25px;top:151.3px;width:0.7px;height:2.2px;background:#8a8a8a"></div>
<div class="a" style="left:681.77px;top:152.1px;width:0.7px;height:0.7px;background:#8a8a8a"></div>
<div class="a" style="left:690.93px;top:152.1px;width:0.7px;height:0.7px;background:#8a8a8a"></div>
<div class="a" style="left:695.55px;top:151.3px;width:0.7px;height:2.2px;background:#8a8a8a"></div>
<div class="a" style="left:700.07px;top:152.1px;width:0.7px;height:0.7px;background:#8a8a8a"></div>
<div class="a" style="left:709.23px;top:152.1px;width:0.7px;height:0.7px;background:#8a8a8a"></div>
<div class="a" style="left:713.85px;top:151.3px;width:0.7px;height:2.2px;background:#8a8a8a"></div>
<div class="a" style="left:718.38px;top:152.1px;width:0.7px;height:0.7px;background:#8a8a8a"></div>
<div class="a" style="left:727.52px;top:152.1px;width:0.7px;height:0.7px;background:#8a8a8a"></div>
<div class="a" style="left:732.15px;top:151.3px;width:0.7px;height:2.2px;background:#8a8a8a"></div>
<div class="a" style="left:736.68px;top:152.1px;width:0.7px;height:0.7px;background:#8a8a8a"></div>
<div class="a" style="left:745.82px;top:152.1px;width:0.7px;height:0.7px;background:#8a8a8a"></div>
<div class="a" style="left:750.45px;top:151.3px;width:0.7px;height:2.2px;background:#8a8a8a"></div>
<div class="a" style="left:754.98px;top:152.1px;width:0.7px;height:0.7px;background:#8a8a8a"></div>
<div class="a" style="left:764.12px;top:152.1px;width:0.7px;height:0.7px;background:#8a8a8a"></div>
<div class="a" style="left:768.75px;top:151.3px;width:0.7px;height:2.2px;background:#8a8a8a"></div>
<div class="a" style="left:773.27px;top:152.1px;width:0.7px;height:0.7px;background:#8a8a8a"></div>
<div class="a" style="left:782.43px;top:152.1px;width:0.7px;height:0.7px;background:#8a8a8a"></div>
<div class="a" style="left:787.05px;top:151.3px;width:0.7px;height:2.2px;background:#8a8a8a"></div>
<div class="a" style="left:791.57px;top:152.1px;width:0.7px;height:0.7px;background:#8a8a8a"></div>
<div class="a" style="left:800.73px;top:152.1px;width:0.7px;height:0.7px;background:#8a8a8a"></div>
<div class="a" style="left:805.35px;top:151.3px;width:0.7px;height:2.2px;background:#8a8a8a"></div>
<div class="a" style="left:809.88px;top:152.1px;width:0.7px;height:0.7px;background:#8a8a8a"></div>
<div class="a" style="left:819.02px;top:152.1px;width:0.7px;height:0.7px;background:#8a8a8a"></div>
<div class="a" style="left:823.65px;top:151.3px;width:0.7px;height:2.2px;background:#8a8a8a"></div>
<div class="a" style="left:828.18px;top:152.1px;width:0.7px;height:0.7px;background:#8a8a8a"></div>
<div class="a" style="left:837.32px;top:152.1px;width:0.7px;height:0.7px;background:#8a8a8a"></div>
<div class="a" style="left:841.95px;top:151.3px;width:0.7px;height:2.2px;background:#8a8a8a"></div>
<div class="a" style="left:846.48px;top:152.1px;width:0.7px;height:0.7px;background:#8a8a8a"></div>
<div class="a" style="left:855.62px;top:152.1px;width:0.7px;height:0.7px;background:#8a8a8a"></div>
<div class="a" style="left:860.25px;top:151.3px;width:0.7px;height:2.2px;background:#8a8a8a"></div>
<div class="a" style="left:864.77px;top:152.1px;width:0.7px;height:0.7px;background:#8a8a8a"></div>
<div class="a" style="left:873.93px;top:152.1px;width:0.7px;height:0.7px;background:#8a8a8a"></div>
<svg class="a" style="left:427.50px;top:147.8px" width="6" height="11" viewBox="0 0 6 11"><path d="M0.5 0.5 h5 L3 3.8z M0.5 7.6 h5 L3 4.3z" fill="#fff" stroke="#777" stroke-width="0.5"/><rect x="0.5" y="7.6" width="5" height="2.6" fill="#fff" stroke="#777" stroke-width="0.5"/></svg>
<div class="a" style="left:477.00px;top:156.5px;width:1.2px;height:1.2px;background:#444"></div>
<div class="a" style="left:523.60px;top:156.5px;width:1.2px;height:1.2px;background:#444"></div>
<div class="a" style="left:570.40px;top:156.5px;width:1.2px;height:1.2px;background:#444"></div>
<div class="a rnv" style="left:208px;top:249.30px;width:5.6px;height:6px">1</div>
<div class="a rnv" style="left:208px;top:231.00px;width:5.6px;height:6px">2</div>
<div class="a rnv" style="left:208px;top:212.70px;width:5.6px;height:6px">3</div>
<div class="a rnv" style="left:208px;top:194.40px;width:5.6px;height:6px">4</div>
<div class="a rnv" style="left:208px;top:176.10px;width:5.6px;height:6px">5</div>
<div class="a rnv" style="left:208px;top:285.90px;width:5.6px;height:6px">1</div>
<div class="a rnv" style="left:208px;top:304.20px;width:5.6px;height:6px">2</div>
<div class="a rnv" style="left:208px;top:322.50px;width:5.6px;height:6px">3</div>
<div class="a rnv" style="left:208px;top:340.80px;width:5.6px;height:6px">4</div>
<div class="a rnv" style="left:208px;top:359.10px;width:5.6px;height:6px">5</div>
<div class="a rnv" style="left:208px;top:377.40px;width:5.6px;height:6px">6</div>
<div class="a rnv" style="left:208px;top:395.70px;width:5.6px;height:6px">7</div>
<div class="a rnv" style="left:208px;top:414.00px;width:5.6px;height:6px">8</div>
<div class="a rnv" style="left:208px;top:432.30px;width:5.6px;height:6px">9</div>
<div class="a rnv" style="left:208px;top:450.60px;width:5.6px;height:6px">10</div>
<div class="a rnv" style="left:208px;top:468.90px;width:5.6px;height:6px">11</div>
<div class="a rnv" style="left:208px;top:487.20px;width:5.6px;height:6px">12</div>
<div class="a" style="left:210px;top:187.95px;width:1.6px;height:0.6px;background:#7a7a7a"></div>
<div class="a" style="left:210px;top:206.25px;width:1.6px;height:0.6px;background:#7a7a7a"></div>
<div class="a" style="left:210px;top:224.55px;width:1.6px;height:0.6px;background:#7a7a7a"></div>
<div class="a" style="left:210px;top:242.85px;width:1.6px;height:0.6px;background:#7a7a7a"></div>
<div class="a" style="left:210px;top:261.15px;width:1.6px;height:0.6px;background:#7a7a7a"></div>
<div class="a" style="left:210px;top:279.45px;width:1.6px;height:0.6px;background:#7a7a7a"></div>
<div class="a" style="left:210px;top:297.75px;width:1.6px;height:0.6px;background:#7a7a7a"></div>
<div class="a" style="left:210px;top:316.05px;width:1.6px;height:0.6px;background:#7a7a7a"></div>
<div class="a" style="left:210px;top:334.35px;width:1.6px;height:0.6px;background:#7a7a7a"></div>
<div class="a" style="left:210px;top:352.65px;width:1.6px;height:0.6px;background:#7a7a7a"></div>
<div class="a" style="left:210px;top:370.95px;width:1.6px;height:0.6px;background:#7a7a7a"></div>
<div class="a" style="left:210px;top:389.25px;width:1.6px;height:0.6px;background:#7a7a7a"></div>
<div class="a" style="left:210px;top:407.55px;width:1.6px;height:0.6px;background:#7a7a7a"></div>
<div class="a" style="left:210px;top:425.85px;width:1.6px;height:0.6px;background:#7a7a7a"></div>
<div class="a" style="left:210px;top:444.15px;width:1.6px;height:0.6px;background:#7a7a7a"></div>
<div class="a" style="left:210px;top:462.45px;width:1.6px;height:0.6px;background:#7a7a7a"></div>
<div class="a" style="left:210px;top:480.75px;width:1.6px;height:0.6px;background:#7a7a7a"></div>
<div class="a" style="left:210px;top:499.05px;width:1.6px;height:0.6px;background:#7a7a7a"></div>
<div class="a" style="left:294px;top:194px;width:552px;height:1px;background:#8c8c8c"></div>
<div class="a" style="left:294px;top:205px;width:552px;height:1px;background:#8c8c8c"></div>
<div class="a" style="left:294px;top:227px;width:552px;height:1px;background:#8c8c8c"></div>
<div class="a" style="left:294px;top:245px;width:552px;height:1px;background:#8c8c8c"></div>
<div class="a" style="left:294px;top:256px;width:552px;height:1px;background:#8c8c8c"></div>
<div class="a" style="left:294px;top:285px;width:552px;height:1px;background:#8c8c8c"></div>
<div class="a" style="left:294px;top:314px;width:552px;height:1px;background:#8c8c8c"></div>
<div class="a" style="left:294px;top:356px;width:552px;height:1px;background:#8c8c8c"></div>
<div class="a" style="left:294px;top:366px;width:552px;height:1px;background:#8c8c8c"></div>
<div class="a" style="left:294px;top:388px;width:552px;height:1px;background:#8c8c8c"></div>
<div class="a" style="left:294px;top:403px;width:552px;height:1px;background:#8c8c8c"></div>
<div class="a" style="left:294px;top:474px;width:552px;height:1px;background:#8c8c8c"></div>
<div class="a" style="left:294px;top:485px;width:552px;height:1px;background:#8c8c8c"></div>
<div class="a" style="left:294px;top:194px;width:1px;height:291px;background:#8c8c8c"></div>
<div class="a" style="left:845px;top:194px;width:1px;height:291px;background:#8c8c8c"></div>
<div class="a" style="left:321px;top:205px;width:1px;height:280px;background:#8c8c8c"></div>
<div class="a" style="left:430px;top:205px;width:1px;height:280px;background:#8c8c8c"></div>
<div class="a" style="left:612px;top:205px;width:1px;height:280px;background:#8c8c8c"></div>
<div class="a" style="left:780px;top:205px;width:1px;height:280px;background:#8c8c8c"></div>
<div class="a" style="left:292.40px;top:191.80px;width:4.4px;height:4.4px;border:0.6px solid #777;border-radius:50%;background:#fff"></div>
<div class="a" style="left:568.00px;top:191.80px;width:4.4px;height:4.4px;border:0.6px solid #777;border-radius:50%;background:#fff"></div>
<div class="a" style="left:843.50px;top:191.80px;width:4.4px;height:4.4px;border:0.6px solid #777;border-radius:50%;background:#fff"></div>
<div class="a" style="left:292.40px;top:345.10px;width:4.4px;height:4.4px;border:0.6px solid #777;border-radius:50%;background:#fff"></div>
<div class="a" style="left:843.50px;top:345.10px;width:4.4px;height:4.4px;border:0.6px solid #777;border-radius:50%;background:#fff"></div>
<div class="a" style="left:292.40px;top:498.30px;width:4.4px;height:4.4px;border:0.6px solid #777;border-radius:50%;background:#fff"></div>
<div class="a" style="left:568.00px;top:498.30px;width:4.4px;height:4.4px;border:0.6px solid #777;border-radius:50%;background:#fff"></div>
<div class="a" style="left:843.50px;top:498.30px;width:4.4px;height:4.4px;border:0.6px solid #777;border-radius:50%;background:#fff"></div>
<div class="a tt" style="left:367.40px;top:182.57px;font-size:9.130px;line-height:10.96px;transform:scaleX(0.9091);transform-origin:0 50%;font-weight:bold;color:#111">METODOLOGÍA DEL TALLER – RECOJO DE PROPUESTAS EN EL GRUPO DE TRABAJO</div>
<div class="a" style="left:548.8px;top:195px;width:42.5px;height:9.6px;background:#ffff00"></div>
<div class="a tt" style="left:550.20px;top:195.10px;font-size:7.425px;line-height:8.91px;transform:scaleX(0.9091);transform-origin:0 50%;font-weight:bold;color:#111">EJE: SALUD</div>
<div class="a tt" style="left:295.20px;top:211.70px;font-size:8.030px;line-height:9.64px;transform:scaleX(0.9091);transform-origin:0 50%;font-weight:bold;color:#111">N°</div>
<div class="a tt" style="left:354.60px;top:211.66px;font-size:8.085px;line-height:9.70px;transform:scaleX(0.9091);transform-origin:0 50%;font-weight:bold;color:#111">PROBLEMA</div>
<div class="a tt" style="left:484.80px;top:211.63px;font-size:8.140px;line-height:9.77px;transform:scaleX(0.9091);transform-origin:0 50%;font-weight:bold;color:#111">SITUACIÓN ACTUAL</div>
<div class="a tt" style="left:674.40px;top:211.70px;font-size:8.030px;line-height:9.64px;transform:scaleX(0.9091);transform-origin:0 50%;font-weight:bold;color:#111">PROPUESTA</div>
<div class="a tt" style="left:787.30px;top:206.10px;font-size:8.184px;line-height:9.82px;transform:scaleX(0.9091);transform-origin:0 50%;font-weight:bold;color:#111">PRIORIDADES</div>
<div class="a tt" style="left:793.50px;top:217.80px;font-size:8.184px;line-height:9.82px;transform:scaleX(0.9091);transform-origin:0 50%;font-weight:bold;color:#111">(enumere)</div>
<div class="a tt" style="left:307.70px;top:233.02px;font-size:5.724px;line-height:6.87px;transform:scaleX(0.9259);transform-origin:0 50%;">1</div>
<div class="a tt" style="left:307.70px;top:248.22px;font-size:5.724px;line-height:6.87px;transform:scaleX(0.9259);transform-origin:0 50%;">2</div>
<div class="a tt" style="left:307.70px;top:267.52px;font-size:5.724px;line-height:6.87px;transform:scaleX(0.9259);transform-origin:0 50%;">3</div>
<div class="a tt" style="left:307.70px;top:296.22px;font-size:5.724px;line-height:6.87px;transform:scaleX(0.9259);transform-origin:0 50%;">4</div>
<div class="a tt" style="left:307.70px;top:332.22px;font-size:5.724px;line-height:6.87px;transform:scaleX(0.9259);transform-origin:0 50%;">5</div>
<div class="a tt" style="left:307.70px;top:358.22px;font-size:5.724px;line-height:6.87px;transform:scaleX(0.9259);transform-origin:0 50%;">6</div>
<div class="a tt" style="left:307.70px;top:374.22px;font-size:5.724px;line-height:6.87px;transform:scaleX(0.9259);transform-origin:0 50%;">7</div>
<div class="a tt" style="left:307.70px;top:392.92px;font-size:5.724px;line-height:6.87px;transform:scaleX(0.9259);transform-origin:0 50%;">8</div>
<div class="a tt" style="left:307.70px;top:435.92px;font-size:5.724px;line-height:6.87px;transform:scaleX(0.9259);transform-origin:0 50%;">9</div>
<div class="a tt" style="left:306.30px;top:476.22px;font-size:5.724px;line-height:6.87px;transform:scaleX(0.9259);transform-origin:0 50%;">10</div>
<div class="a tt" style="left:323.90px;top:239.10px;font-size:5.454px;line-height:6.54px;transform:scaleX(0.9259);transform-origin:0 50%;">Desnutrición crónica INEI-ENDES PPR 2021/P</div>
<div class="a tt" style="left:339.00px;top:248.87px;font-size:5.346px;line-height:6.42px;transform:scaleX(0.9259);transform-origin:0 50%;">Anemia INEI-ENDES PPR 2021/P</div>
<div class="a tt" style="left:323.00px;top:256.98px;font-size:5.940px;line-height:7.13px;transform:scaleX(0.9259);transform-origin:0 50%;">Mortalidad materna</div>
<div class="a tt" style="left:321.50px;top:264.29px;font-size:5.616px;line-height:6.74px;transform:scaleX(0.9259);transform-origin:0 50%;"><b>Fuente:</b> Centro Nacional de Epidemiología,</div>
<div class="a tt" style="left:321.50px;top:271.29px;font-size:5.616px;line-height:6.74px;transform:scaleX(0.9259);transform-origin:0 50%;">Prevención y Control de enfermedades -</div>
<div class="a tt" style="left:321.50px;top:278.29px;font-size:5.616px;line-height:6.74px;transform:scaleX(0.9259);transform-origin:0 50%;">MINSA. (*) Hasta la SE 30-2020</div>
<div class="a tt" style="left:322.50px;top:300.33px;font-size:5.562px;line-height:6.67px;transform:scaleX(0.9259);transform-origin:0 50%;">Agua tratada, segura y saneamiento&nbsp; básico</div>
<div class="a tt" style="left:321.50px;top:306.93px;font-size:5.562px;line-height:6.67px;transform:scaleX(0.9259);transform-origin:0 50%;">INEI-ENDES PPR 2021/P</div>
<div class="a tt" style="left:322.90px;top:328.32px;font-size:5.573px;line-height:6.69px;transform:scaleX(0.9259);transform-origin:0 50%;">Embarazo en adolescentes:</div>
<div class="a tt" style="left:321.80px;top:335.52px;font-size:5.573px;line-height:6.69px;transform:scaleX(0.9259);transform-origin:0 50%;">- De 11 a 14 años</div>
<div class="a tt" style="left:321.80px;top:349.32px;font-size:5.573px;line-height:6.69px;transform:scaleX(0.9259);transform-origin:0 50%;">- De 15 a 19 años</div>
<div class="a tt" style="left:321.80px;top:359.92px;font-size:5.573px;line-height:6.69px;transform:scaleX(0.9259);transform-origin:0 50%;">VIH SIDA</div>
<div class="a tt" style="left:323.00px;top:381.12px;font-size:5.573px;line-height:6.69px;transform:scaleX(0.9259);transform-origin:0 50%;">TBC (Primer semestre 2021)</div>
<div class="a tt" style="left:323.00px;top:396.99px;font-size:5.616px;line-height:6.74px;transform:scaleX(0.9259);transform-origin:0 50%;">Metaxénicas: Dengue y Zika</div>
<div class="a tt" style="left:321.50px;top:425.16px;font-size:5.368px;line-height:6.44px;transform:scaleX(0.9259);transform-origin:0 50%;"><b><i>Enfermedades no transmisibles</i></b></div>
<div class="a tt" style="left:321.80px;top:432.36px;font-size:5.508px;line-height:6.61px;transform:scaleX(0.9259);transform-origin:0 50%;">Personas de 15 y más años de edad con</div>
<div class="a tt" style="left:321.80px;top:439.41px;font-size:5.508px;line-height:6.61px;transform:scaleX(0.9259);transform-origin:0 50%;">diagnóstico de hipertensión</div>
<div class="a tt" style="left:321.80px;top:446.46px;font-size:5.508px;line-height:6.61px;transform:scaleX(0.9259);transform-origin:0 50%;">Personas de 15 y más años de edad con</div>
<div class="a tt" style="left:321.80px;top:453.51px;font-size:5.508px;line-height:6.61px;transform:scaleX(0.9259);transform-origin:0 50%;">diagnóstico de diabetes mellitus</div>
<div class="a tt" style="left:321.80px;top:460.56px;font-size:5.508px;line-height:6.61px;transform:scaleX(0.9259);transform-origin:0 50%;">Personas de 15 y más años de edad con</div>
<div class="a tt" style="left:321.80px;top:467.61px;font-size:5.508px;line-height:6.61px;transform:scaleX(0.9259);transform-origin:0 50%;">obesidad</div>
<div class="a tt" style="left:432.00px;top:238.59px;font-size:5.465px;line-height:6.56px;transform:scaleX(0.9259);transform-origin:0 50%;">2020: 5.9%;</div>
<div class="a tt" style="left:477.00px;top:238.59px;font-size:5.465px;line-height:6.56px;transform:scaleX(0.9259);transform-origin:0 50%;">2021: 4.4%</div>
<div class="a tt" style="left:432.00px;top:248.99px;font-size:5.465px;line-height:6.56px;transform:scaleX(0.9259);transform-origin:0 50%;">2020: 35.8%;</div>
<div class="a tt" style="left:477.00px;top:248.99px;font-size:5.465px;line-height:6.56px;transform:scaleX(0.9259);transform-origin:0 50%;">2021: 36.3%</div>
<div class="a tt" style="left:432.00px;top:271.39px;font-size:5.465px;line-height:6.56px;transform:scaleX(0.9259);transform-origin:0 50%;">2019: 10;</div>
<div class="a tt" style="left:524.00px;top:271.39px;font-size:5.465px;line-height:6.56px;transform:scaleX(0.9259);transform-origin:0 50%;">2020: 10 &nbsp; 2021: 16 &nbsp; 2022</div>
<div class="a" style="left:585.8px;top:271.2px;width:0.5px;height:6.4px;background:#222"></div>
<div class="a tt" style="left:431.60px;top:299.93px;font-size:5.562px;line-height:6.67px;transform:scaleX(0.9259);transform-origin:0 50%;">Agua tratada: 2020: 99.2% &nbsp; &nbsp; 2021: 99.2%</div>
<div class="a tt" style="left:430.00px;top:306.90px;font-size:5.605px;line-height:6.73px;transform:scaleX(0.9259);transform-origin:0 50%;">Saneamiento básico: 2020: 96.9%; 2021: 96.4%</div>
<div class="a tt" style="left:430.50px;top:335.56px;font-size:5.508px;line-height:6.61px;transform:scaleX(0.9259);transform-origin:0 50%;">2020: 28</div>
<div class="a tt" style="left:475.30px;top:335.56px;font-size:5.508px;line-height:6.61px;transform:scaleX(0.9259);transform-origin:0 50%;">2021: 33 (aumentó en 15%)</div>
<div class="a tt" style="left:430.50px;top:349.36px;font-size:5.508px;line-height:6.61px;transform:scaleX(0.9259);transform-origin:0 50%;">2020: 1,559</div>
<div class="a tt" style="left:475.30px;top:349.36px;font-size:5.508px;line-height:6.61px;transform:scaleX(0.9259);transform-origin:0 50%;">2021: 1,364 (se redujo en 15%)</div>
<div class="a tt" style="left:431.00px;top:374.39px;font-size:5.465px;line-height:6.56px;transform:scaleX(0.9259);transform-origin:0 50%;">A nivel de DIRESA Ica:</div>
<div class="a tt" style="left:432.00px;top:381.19px;font-size:5.465px;line-height:6.56px;transform:scaleX(0.9259);transform-origin:0 50%;">2020: 389</div>
<div class="a tt" style="left:524.00px;top:381.19px;font-size:5.465px;line-height:6.56px;transform:scaleX(0.9259);transform-origin:0 50%;">2021: 313</div>
<div class="a tt" style="left:430.50px;top:410.96px;font-size:5.508px;line-height:6.61px;transform:scaleX(0.9259);transform-origin:0 50%;">Región Ica según</div>
<div class="a tt" style="left:430.50px;top:418.16px;font-size:5.508px;line-height:6.61px;transform:scaleX(0.9259);transform-origin:0 50%;">2019: 9.1%</div>
<div class="a tt" style="left:430.50px;top:425.06px;font-size:5.508px;line-height:6.61px;transform:scaleX(0.9259);transform-origin:0 50%;">2020: 9.5%</div>
<div class="a tt" style="left:430.50px;top:439.06px;font-size:5.508px;line-height:6.61px;transform:scaleX(0.9259);transform-origin:0 50%;">2019: 4.8%</div>
<div class="a tt" style="left:430.50px;top:446.16px;font-size:5.508px;line-height:6.61px;transform:scaleX(0.9259);transform-origin:0 50%;">2020: 5.2%</div>
<div class="a tt" style="left:430.50px;top:460.16px;font-size:5.508px;line-height:6.61px;transform:scaleX(0.9259);transform-origin:0 50%;">2019: 31.9%</div>
<div class="a tt" style="left:430.50px;top:466.96px;font-size:5.508px;line-height:6.61px;transform:scaleX(0.9259);transform-origin:0 50%;">2020: 33.5%</div>
<div class="a tt" style="left:691.30px;top:238.53px;font-size:4.644px;line-height:5.57px;transform:scaleX(0.9259);transform-origin:0 50%;">4.4%</div>
<div class="a tt" style="left:690.20px;top:248.93px;font-size:4.644px;line-height:5.57px;transform:scaleX(0.9259);transform-origin:0 50%;">34.0%</div>
<div class="a tt" style="left:613.00px;top:422.82px;font-size:5.724px;line-height:6.87px;transform:scaleX(0.9259);transform-origin:0 50%;">2022: 9.0% (Hipertensión)</div>
<div class="a tt" style="left:613.00px;top:437.82px;font-size:5.724px;line-height:6.87px;transform:scaleX(0.9259);transform-origin:0 50%;">2022: 5.0% (Diabetes)</div>
<div class="a tt" style="left:613.00px;top:460.22px;font-size:5.724px;line-height:6.87px;transform:scaleX(0.9259);transform-origin:0 50%;">2022: 32.0% (Obesidad)</div>
<div class="a tt" style="left:295.90px;top:494.49px;font-size:5.778px;line-height:6.93px;transform:scaleX(0.9259);transform-origin:0 50%;"><span style="color:#e02020">*</span>Se pueden considerar los indicadores que ya se han venido trabajando y haciendo el seguimiento en el Acuerdo de Gobernabilidad vigente</div>
<div class="a" style="left:849px;top:484.8px;width:25px;height:18px;overflow:hidden"><div class="a" style="left:0;top:0;width:8px;height:18px;background:#1a6fc0;border-radius:1px 0 0 0"></div><div class="a" style="left:8px;top:0;width:8px;height:18px;background:#e02828"></div><div class="a" style="left:16px;top:0;width:9px;height:18px;background:#ffd800"></div><svg class="a" style="left:0;top:0" width="25" height="18" viewBox="0 0 25 18"><path d="M4 1 C2 6 3 12 7 18 M12 1 C10 6 11 12 15 18 M20 1 C18 6 19 12 23 18" stroke="#fff" stroke-width="0.8" fill="none"/><circle cx="6" cy="6" r="0.6" fill="#fff"/><circle cx="14" cy="6" r="0.6" fill="#fff"/><circle cx="22" cy="6" r="0.6" fill="#fff"/></svg></div>
</div></div>
<!-- recording overlay -->
<div class="a" style="left:5px;top:83.6px;width:16px;height:15.2px;background:#262626;border-radius:3px"></div>
<svg class="a" style="left:8.5px;top:86px" width="9" height="10" viewBox="0 0 9 10"><path d="M4.5 0.5 L8.3 2 V5 C8.3 7.3 6.7 8.8 4.5 9.6 C2.3 8.8 0.7 7.3 0.7 5 V2z" fill="#2fcf5a"/><path d="M2.6 5 L4 6.4 L6.6 3.6" stroke="#1a1a1a" stroke-width="0.9" fill="none"/></svg>
<div class="a" style="left:26.4px;top:83px;width:122.4px;height:17px;background:rgba(22,22,22,0.62);border-radius:3px"></div>
<svg class="a" style="left:33px;top:85.5px" width="13" height="10" viewBox="0 0 13 10"><path d="M3 8.8 a2.6 2.6 0 0 1 0.3 -5.2 a3.4 3.4 0 0 1 6.4 -0.4 a2.8 2.8 0 0 1 0.3 5.6z" fill="#c8c8c8"/><circle cx="6.5" cy="6" r="1.5" fill="#e02020"/></svg>
<div class="a" style="left:55.2px;top:86px;font-size:7.6px;line-height:10px;color:#e0e0e0">Grabando...</div>
<div class="a" style="left:120.2px;top:88.8px;width:2px;height:6px;background:#f0f0f0"></div>
<div class="a" style="left:124.2px;top:88.8px;width:2px;height:6px;background:#f0f0f0"></div>
<div class="a" style="left:138.2px;top:89.2px;width:5.8px;height:5.6px;background:#f0f0f0"></div>

<!-- ZOOM TOOLBAR -->
<div class="a" style="left:0;top:502.5px;width:1000px;height:34.5px;background:#1a1a1a"></div>
<svg class="a" style="left:40px;top:505px" width="18" height="17" viewBox="0 0 18 17">
 <rect x="6.5" y="1.5" width="4.5" height="8.5" rx="2.2" fill="#9a9a9a"/><path d="M4.5 7 a4.3 4.3 0 0 0 8.6 0 M8.8 11.5 v2.5 M6.5 14.5 h4.6" stroke="#9a9a9a" stroke-width="0.9" fill="none"/>
 <path d="M2 15.5 L16 1.5" stroke="#e0282e" stroke-width="1.1"/>
</svg>
<svg class="a" style="left:86px;top:511.5px" width="6" height="4" viewBox="0 0 6 4"><path d="M1 3 L3 1 L5 3" stroke="#cfcfcf" stroke-width="0.9" fill="none"/></svg>
<div class="a zt" style="left:6.7px;top:524.5px;font-size:8.489px">Cancelar silenciar ahora</div>
<svg class="a" style="left:119px;top:506px" width="20" height="15" viewBox="0 0 20 15">
 <rect x="2" y="3" width="11" height="9" rx="1.5" fill="#9a9a9a"/><path d="M13.5 6.5 L17.5 4 V11 L13.5 8.5z" fill="#9a9a9a"/>
 <path d="M2 14 L15 1" stroke="#e0282e" stroke-width="1.1"/>
</svg>
<svg class="a" style="left:150px;top:511.5px" width="6" height="4" viewBox="0 0 6 4"><path d="M1 3 L3 1 L5 3" stroke="#cfcfcf" stroke-width="0.9" fill="none"/></svg>
<div class="a zt" style="left:107px;top:524.5px;font-size:8.532px">Iniciar video</div>

<svg class="a" style="left:291px;top:507px" width="13" height="14" viewBox="0 0 13 14"><path d="M6.5 0.5 L12 2.5 V6.5 C12 10 9.5 12.3 6.5 13.5 C3.5 12.3 1 10 1 6.5 V2.5z" fill="none" stroke="#c8c8c8" stroke-width="1.1"/><path d="M6.5 1.3 V7 H11.3 V2.9z M6.5 7 V12.6 C4 11.4 2 9.6 1.8 7z" fill="#c8c8c8"/></svg>
<div class="a zt" style="left:279px;top:524.5px;font-size:8.640px">Seguridad</div>
<svg class="a" style="left:357.5px;top:507px" width="17" height="13" viewBox="0 0 17 13"><circle cx="5.3" cy="3.3" r="2.8" fill="#c8c8c8"/><circle cx="12" cy="4" r="2.4" fill="#c8c8c8"/><path d="M0.5 12.5 a4.8 4.3 0 0 1 9.6 0z" fill="#c8c8c8"/><path d="M8.2 12.5 a4.2 4 0 0 1 8.3 0z" fill="#c8c8c8"/></svg>
<div class="a zt" style="left:376.6px;top:508.3px;font-size:8.208px">43</div>
<svg class="a" style="left:397px;top:511.5px" width="6" height="4" viewBox="0 0 6 4"><path d="M1 3 L3 1 L5 3" stroke="#cfcfcf" stroke-width="0.9" fill="none"/></svg>
<div class="a zt" style="left:343px;top:524.5px;font-size:8.694px">Participantes</div>
<svg class="a" style="left:427.5px;top:508px" width="14" height="13" viewBox="0 0 14 13"><rect x="0.5" y="0.5" width="13" height="9" rx="2" fill="#c8c8c8"/><path d="M3 9 L3 12.5 L6.5 9z" fill="#c8c8c8"/></svg>
<div class="a zt" style="left:426px;top:524.5px;font-size:8.640px">Chat</div>
<div class="a" style="left:491px;top:508px;width:16px;height:12px;background:#23d160;border-radius:2px"></div>
<svg class="a" style="left:495px;top:510px" width="8" height="8" viewBox="0 0 8 8"><path d="M4 7.2 V1.5 M1.6 3.8 L4 1.3 L6.4 3.8" stroke="#1a1a1a" stroke-width="1.2" fill="none"/></svg>
<svg class="a" style="left:526px;top:511.5px" width="6" height="4" viewBox="0 0 6 4"><path d="M1 3 L3 1 L5 3" stroke="#cfcfcf" stroke-width="0.9" fill="none"/></svg>
<div class="a zt" style="left:465.6px;top:524.5px;font-size:8.748px;color:#3ccf50">Compartir pantalla</div>
<div class="a" style="left:575px;top:505.6px;width:13px;height:13.4px;background:#9a9a9a;border-radius:2px"></div>
<div class="a" style="left:579px;top:509.3px;width:1.5px;height:6px;background:#1a1a1a"></div>
<div class="a" style="left:582.5px;top:509.3px;width:1.5px;height:6px;background:#1a1a1a"></div>
<div class="a" style="left:591px;top:505.6px;width:13px;height:13.4px;background:#9a9a9a;border-radius:2px"></div>
<div class="a" style="left:594.5px;top:509.3px;width:6px;height:6px;background:#1a1a1a"></div>
<div class="a zt" style="left:543px;top:524.5px;font-size:8.662px">Pausar/detener grabación</div>
<svg class="a" style="left:671.6px;top:507px" width="14" height="14" viewBox="0 0 14 14"><rect x="0" y="0" width="6.3" height="6.3" rx="1" fill="#c8c8c8"/><rect x="7.5" y="0" width="6.3" height="6.3" rx="1" fill="#c8c8c8"/><rect x="0" y="7.5" width="6.3" height="6.3" rx="1" fill="#c8c8c8"/><rect x="7.5" y="7.5" width="6.3" height="6.3" rx="1" fill="#c8c8c8"/></svg>
<div class="a zt" style="left:645.7px;top:524.5px;font-size:8.640px">Sección de Grupos</div>
<svg class="a" style="left:736px;top:505.5px" width="15" height="15" viewBox="0 0 15 15"><circle cx="6.6" cy="8.3" r="6" fill="#c8c8c8"/><circle cx="4.6" cy="7" r="0.9" fill="#1a1a1a"/><circle cx="8.6" cy="7" r="0.9" fill="#1a1a1a"/><path d="M3.8 9.5 a2.9 2.5 0 0 0 5.6 0" stroke="#1a1a1a" stroke-width="0.9" fill="none"/><path d="M12.3 0.5 v4 M10.3 2.5 h4" stroke="#c8c8c8" stroke-width="1"/></svg>
<div class="a zt" style="left:723px;top:524.9px;font-size:8.230px">Reacciones</div>
<svg class="a" style="left:789.5px;top:508.5px" width="12" height="12" viewBox="0 0 12 12"><path d="M4 1 H2.5 A1.5 1.5 0 0 0 1 2.5 V6 M11 6 V9.5 A1.5 1.5 0 0 1 9.5 11 H6" stroke="#c8c8c8" stroke-width="1" fill="none"/><circle cx="9" cy="3" r="1.8" fill="none" stroke="#c8c8c8" stroke-width="1"/><circle cx="3" cy="9" r="1.8" fill="none" stroke="#c8c8c8" stroke-width="1"/></svg>
<div class="a zt" style="left:774px;top:524.5px;font-size:8.640px">Aplicaciones</div>
<div class="a" style="left:952px;top:511px;width:40px;height:17px;background:#c62828;border-radius:4px"></div>
<div class="a" style="left:963.5px;top:515px;font-size:7.5px;line-height:9px;font-weight:bold;color:#fff">Salir</div>

<!-- TASKBAR -->
<div class="a" style="left:0;top:537px;width:1000px;height:26px;background:#1c1c1c"></div>
<svg class="a" style="left:10px;top:544.8px" width="11" height="11" viewBox="0 0 11 11"><path d="M0 1.6 L4.8 0.9 V5.1 H0z M5.4 0.8 L11 0 V5.1 H5.4z M0 5.8 H4.8 V10 L0 9.3z M5.4 5.8 H11 V11 L5.4 10.2z" fill="#f4f4f4"/></svg>
<svg class="a" style="left:41px;top:544px" width="12" height="12" viewBox="0 0 12 12"><circle cx="7.3" cy="4.6" r="3.5" fill="none" stroke="#e8e8e8" stroke-width="0.9"/><path d="M4.8 7.1 L1 10.9" stroke="#e8e8e8" stroke-width="1"/></svg>
<!-- edge -->
<svg class="a" style="left:72px;top:541.5px" width="16" height="16" viewBox="0 0 16 16"><defs><linearGradient id="eg" x1="0" y1="0" x2="0" y2="1"><stop offset="0" stop-color="#2fc48a"/><stop offset="0.45" stop-color="#29a8e8"/><stop offset="1" stop-color="#1060b8"/></linearGradient></defs>
<path d="M8 0.5 A7.5 7.5 0 1 0 15.5 9.2 C15 12 12 13.5 9.5 13 C6.5 12.3 5.5 9.5 7 8 C8 7 10 7 11.5 8 L15.4 8.5 A7.5 7.5 0 0 0 8 0.5z" fill="url(#eg)"/>
<path d="M15.4 8.5 C15 5 12 3 9 3.5 C5.5 4 3 7 3.5 10.5 C4 8 6 6.5 8.5 6.8 C11 7 12.5 8 15.4 8.5z" fill="#1a8ad8" opacity="0.7"/>
</svg>
<!-- explorer -->
<svg class="a" style="left:104px;top:542.5px" width="16" height="14" viewBox="0 0 16 14"><path d="M0.5 2 H6 L7.5 3.5 H15.5 V13 H0.5z" fill="#f8c838"/><rect x="0.5" y="5" width="15" height="8" fill="#ffd860"/><rect x="4" y="8.5" width="8" height="4.5" fill="#2a8ae0"/><rect x="6" y="10" width="4" height="3" fill="#ffd860"/></svg>
<!-- whatsapp -->
<svg class="a" style="left:137.5px;top:542px" width="15" height="15" viewBox="0 0 15 15"><path d="M7.5 0.8 a6.7 6.7 0 0 1 0 13.4 a6.7 6.7 0 0 1 -3.3 -0.9 L0.8 14.2 L1.8 11 a6.7 6.7 0 0 1 5.7 -10.2z" fill="#fff"/><path d="M7.5 1.8 a5.7 5.7 0 0 1 0 11.4 a5.7 5.7 0 0 1 -3 -0.9 L2.2 12.8 L2.9 10.6 a5.7 5.7 0 0 1 4.6 -8.8z" fill="#2bb741"/><path d="M5 4.5 c-1 1 0 3.5 1.8 5 c1.6 1.3 3.5 1.5 4 0.5 l-1.2 -1 l-1 0.6 c-0.8 -0.3 -1.8 -1.3 -2 -2.1 l0.6 -0.9 l-0.9 -1.4z" fill="#fff"/></svg>
<!-- outlook -->
<svg class="a" style="left:169px;top:542px" width="16" height="15" viewBox="0 0 16 15"><rect x="5" y="1" width="10.5" height="13" rx="1" fill="#28a8ea"/><rect x="5" y="7" width="10.5" height="7" fill="#1070c8"/><rect x="0.5" y="3" width="8.5" height="9" rx="0.8" fill="#0a62b8"/><circle cx="4.8" cy="7.5" r="2.3" fill="none" stroke="#fff" stroke-width="1.1"/></svg>
<!-- word -->
<svg class="a" style="left:201px;top:542px" width="16" height="15" viewBox="0 0 16 15"><rect x="5" y="1" width="10.5" height="13" rx="1" fill="#41a5ee"/><rect x="5" y="5.3" width="10.5" height="4.4" fill="#2b7cd3"/><rect x="5" y="9.7" width="10.5" height="4.3" fill="#185abd"/><rect x="0.5" y="3" width="8.5" height="9" rx="0.8" fill="#103f91"/><path d="M2 5 L3 10 L4.7 6.5 L6.4 10 L7.5 5" stroke="#fff" stroke-width="0.8" fill="none"/></svg>
<!-- ppt -->
<svg class="a" style="left:233px;top:541.5px" width="16" height="16" viewBox="0 0 16 16"><circle cx="9" cy="8" r="7" fill="#ed6c47"/><path d="M9 1 a7 7 0 0 1 7 7 h-7z" fill="#ff8f6b"/><path d="M9 8 h7 a7 7 0 0 1 -7 7z" fill="#d35230"/><rect x="0.5" y="3.5" width="8.5" height="9" rx="0.8" fill="#c43e1c"/><path d="M3.3 10.5 V5.5 h1.8 a1.4 1.4 0 0 1 0 2.8 H3.3" stroke="#fff" stroke-width="0.9" fill="none"/></svg>
<!-- zoom active -->
<div class="a" style="left:258px;top:537px;width:32px;height:26px;background:#3a3a3a"></div>
<div class="a" style="left:266px;top:542px;width:16px;height:15px;background:#4a8cff;border-radius:4.5px"></div>
<div class="a" style="left:269px;top:547px;width:6.5px;height:5px;background:#fff;border-radius:1px"></div>
<svg class="a" style="left:275.5px;top:546.8px" width="4" height="6" viewBox="0 0 4 6"><path d="M0 2 L3.5 0 V5.5 L0 3.5z" fill="#fff"/></svg>
<!-- excel -->
<svg class="a" style="left:297.5px;top:542px" width="16" height="15" viewBox="0 0 16 15"><rect x="5" y="1" width="10.5" height="13" rx="1" fill="#21a366"/><rect x="5" y="1" width="10.5" height="4.3" fill="#33c481"/><rect x="5" y="9.7" width="10.5" height="4.3" fill="#107c41"/><rect x="0.5" y="3" width="8.5" height="9" rx="0.8" fill="#107c41"/><path d="M2.8 5.2 L6.7 9.8 M6.7 5.2 L2.8 9.8" stroke="#fff" stroke-width="0.9"/></svg>
<!-- chrome -->
<svg class="a" style="left:330px;top:542px" width="16" height="16" viewBox="0 0 16 16"><circle cx="8" cy="8" r="7.5" fill="#e8453c"/><path d="M8 8 L1.5 11.75 A7.5 7.5 0 0 0 11.75 14.5z" fill="#34a853"/><path d="M8 8 L11.75 14.5 A7.5 7.5 0 0 0 14.5 4.25 H8z" fill="#fbbc04"/><circle cx="8" cy="8" r="3.6" fill="#fff"/><circle cx="8" cy="8" r="2.7" fill="#1a73e8"/></svg>
<!-- whatsapp 2 -->
<div class="a" style="left:362.5px;top:542px;width:16px;height:15.5px;background:#3a5a58;border-radius:1px"></div>
<svg class="a" style="left:363px;top:542.3px" width="15" height="15" viewBox="0 0 15 15"><path d="M7.5 0.8 a6.7 6.7 0 0 1 0 13.4 a6.7 6.7 0 0 1 -3.3 -0.9 L0.8 14.2 L1.8 11 a6.7 6.7 0 0 1 5.7 -10.2z" fill="#fff"/><path d="M7.5 1.8 a5.7 5.7 0 0 1 0 11.4 a5.7 5.7 0 0 1 -3 -0.9 L2.2 12.8 L2.9 10.6 a5.7 5.7 0 0 1 4.6 -8.8z" fill="#2bb741"/><path d="M5 4.5 c-1 1 0 3.5 1.8 5 c1.6 1.3 3.5 1.5 4 0.5 l-1.2 -1 l-1 0.6 c-0.8 -0.3 -1.8 -1.3 -2 -2.1 l0.6 -0.9 l-0.9 -1.4z" fill="#fff"/></svg>
<div class="a" style="left:99px;top:561px;width:27.0px;height:2px;background:#6fb1e6"></div>
<div class="a" style="left:163.6px;top:561px;width:28.4px;height:2px;background:#6fb1e6"></div>
<div class="a" style="left:196.6px;top:561px;width:27.0px;height:2px;background:#6fb1e6"></div>
<div class="a" style="left:228px;top:561px;width:27.0px;height:2px;background:#6fb1e6"></div>
<div class="a" style="left:258px;top:561px;width:32.0px;height:2px;background:#6fb1e6"></div>
<div class="a" style="left:292.7px;top:561px;width:28.3px;height:2px;background:#6fb1e6"></div>
<div class="a" style="left:325.7px;top:561px;width:28.3px;height:2px;background:#6fb1e6"></div>
<div class="a" style="left:357px;top:561px;width:29.0px;height:2px;background:#6fb1e6"></div>
<!-- tray -->
<svg class="a" style="left:788px;top:547px" width="9" height="5" viewBox="0 0 9 5"><path d="M0.8 4.5 L4.5 0.8 L8.2 4.5" stroke="#e8e8e8" stroke-width="0.9" fill="none"/></svg>
<svg class="a" style="left:804px;top:544.5px" width="10" height="11" viewBox="0 0 10 11"><rect x="0.8" y="0.8" width="5" height="9" rx="1" fill="none" stroke="#d8d8d8" stroke-width="0.8"/><rect x="5.8" y="3" width="3.4" height="4.5" fill="none" stroke="#d8d8d8" stroke-width="0.8"/></svg>
<svg class="a" style="left:818px;top:546px" width="12" height="8" viewBox="0 0 12 8"><path d="M2.5 7.5 a2.2 2.2 0 0 1 0 -4.4 a3.2 3.2 0 0 1 6 -1 a2.7 2.7 0 0 1 1 5.4z" fill="#d8d8d8"/></svg>
<svg class="a" style="left:835.5px;top:543.5px" width="8" height="13" viewBox="0 0 8 13"><rect x="2" y="0.5" width="4" height="7.5" rx="1.8" fill="#d8d8d8"/><path d="M0.8 5.5 a3.2 3.2 0 0 0 6.4 0 M4 9 v3" stroke="#888" stroke-width="0.8" fill="none"/></svg>
<svg class="a" style="left:849px;top:546px" width="12" height="8" viewBox="0 0 12 8"><rect x="1.5" y="1.5" width="9" height="5" fill="none" stroke="#d8d8d8" stroke-width="0.8"/><rect x="2.5" y="2.5" width="7" height="3" fill="#d8d8d8"/><path d="M0.5 0.5 v2" stroke="#d8d8d8" stroke-width="0.9"/></svg>
<svg class="a" style="left:866px;top:545px" width="10" height="10" viewBox="0 0 10 10"><path d="M1 9.5 A8.5 8.5 0 0 1 9.5 1 M3.5 9.5 A6 6 0 0 1 9.5 3.5 M6 9.5 A3.5 3.5 0 0 1 9.5 6" stroke="#d8d8d8" stroke-width="0.8" fill="none"/><circle cx="9" cy="9" r="0.8" fill="#d8d8d8"/></svg>
<svg class="a" style="left:880.3px;top:544.5px" width="12" height="11" viewBox="0 0 12 11"><path d="M0.8 3.5 h2 l3 -2.5 v9 l-3 -2.5 h-2z" fill="none" stroke="#d8d8d8" stroke-width="0.8"/><path d="M7.5 3.5 a2.5 2.5 0 0 1 0 4 M9 2 a4.5 4.5 0 0 1 0 7 M10.5 0.8 a6 6 0 0 1 0 9.4" stroke="#d8d8d8" stroke-width="0.7" fill="none"/></svg>
<div class="a tb" style="left:899.4px;top:545.5px;font-size:6.3px">ESP</div>
<div class="a tb" style="left:932px;top:539.8px;font-size:7.4px">10:33</div>
<div class="a tb" style="left:923.6px;top:550.8px;font-size:8.1px">9/05/2022</div>
<svg class="a" style="left:972.5px;top:544.5px" width="12" height="11" viewBox="0 0 12 11"><path d="M0.8 0.8 h10.4 v7.2 h-5 l-2 2.2 v-2.2 h-3.4z" fill="none" stroke="#e0e0e0" stroke-width="0.8"/></svg>
<div class="a" style="left:996px;top:537px;width:0.8px;height:26px;background:#4a4a4a"></div>
</body></html>
